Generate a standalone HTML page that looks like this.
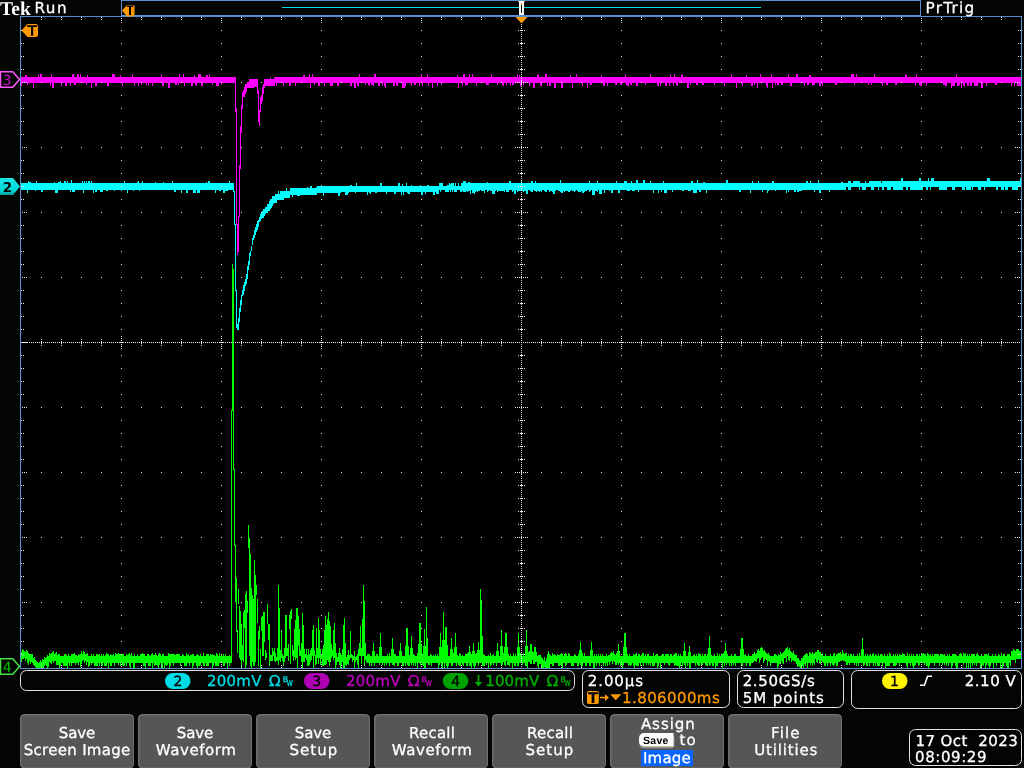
<!DOCTYPE html>
<html lang="en"><head><meta charset="utf-8"><title>Tek Run PrTrig</title>
<style>html,body{margin:0;padding:0;background:#000;overflow:hidden}svg{display:block;will-change:transform}text{font-family:'DejaVu Sans','Liberation Sans',sans-serif;white-space:pre;stroke-width:.3px;text-rendering:geometricPrecision}</style></head><body>
<svg width="1024" height="768" viewBox="0 0 1024 768" shape-rendering="crispEdges">
<rect x="0" y="0" width="1024" height="768" fill="#000"/>
<rect x="0" y="669" width="1024" height="99" fill="#030503"/>
<rect x="0" y="0" width="20" height="768" fill="#030503"/>
<rect x="0" y="0" width="121" height="16" fill="#030503"/>
<rect x="921" y="0" width="103" height="16" fill="#030503"/>
<rect x="1022" y="0" width="2" height="768" fill="#030503"/>
<rect x="122" y="1" width="798" height="14" fill="#030503"/>
<path fill="#00ff00" d="M21 652h1v10h-1zM22 649h1v10h-1zM23 650h1v9h-1zM24 651h1v7h-1zM25 652h1v9h-1zM26 650h1v9h-1zM27 651h1v12h-1zM28 653h1v12h-1zM29 654h1v7h-1zM30 654h1v10h-1zM31 654h1v8h-1zM32 654h1v9h-1zM33 658h1v7h-1zM34 657h1v9h-1zM35 660h1v7h-1zM36 661h1v7h-1zM37 662h1v6h-1zM38 663h1v5h-1zM39 662h1v6h-1zM40 660h1v8h-1zM41 662h1v6h-1zM42 659h1v9h-1zM43 660h1v8h-1zM44 657h1v9h-1zM45 658h1v7h-1zM46 657h1v9h-1zM47 655h1v13h-1zM48 656h1v11h-1zM49 653h1v9h-1zM50 654h1v9h-1zM51 653h1v11h-1zM52 652h1v9h-1zM53 651h1v12h-1zM54 654h1v7h-1zM55 653h1v8h-1zM56 652h1v13h-1zM57 655h1v10h-1zM58 654h1v11h-1zM59 654h1v14h-1zM60 656h1v10h-1zM61 656h1v7h-1zM62 656h1v7h-1zM63 656h1v10h-1zM64 654h1v12h-1zM65 654h1v12h-1zM66 655h1v11h-1zM67 656h1v12h-1zM68 654h1v9h-1zM69 656h1v10h-1zM70 656h1v7h-1zM71 654h1v12h-1zM72 654h1v9h-1zM73 654h1v9h-1zM74 653h1v10h-1zM75 655h1v10h-1zM76 655h1v8h-1zM77 656h1v7h-1zM78 654h1v11h-1zM79 655h1v7h-1zM80 654h1v13h-1zM81 651h1v13h-1zM82 654h1v7h-1zM83 651h1v9h-1zM84 652h1v11h-1zM85 654h1v7h-1zM86 654h1v11h-1zM87 653h1v9h-1zM88 656h1v11h-1zM89 656h1v10h-1zM90 656h1v7h-1zM91 654h1v11h-1zM92 656h1v7h-1zM93 654h1v9h-1zM94 656h1v10h-1zM95 656h1v10h-1zM96 654h1v12h-1zM97 654h1v12h-1zM98 655h1v8h-1zM99 654h1v12h-1zM100 656h1v7h-1zM101 654h1v12h-1zM102 656h1v10h-1zM103 654h1v9h-1zM104 656h1v10h-1zM105 655h1v11h-1zM106 653h1v13h-1zM107 654h1v9h-1zM108 654h1v14h-1zM109 656h1v7h-1zM110 654h1v12h-1zM111 655h1v11h-1zM112 655h1v8h-1zM113 654h1v9h-1zM114 656h1v10h-1zM115 653h1v10h-1zM116 654h1v9h-1zM117 654h1v9h-1zM118 653h1v12h-1zM119 654h1v9h-1zM120 654h1v12h-1zM121 654h1v9h-1zM122 654h1v11h-1zM123 654h1v12h-1zM124 656h1v10h-1zM125 656h1v7h-1zM126 654h1v12h-1zM127 655h1v8h-1zM128 654h1v9h-1zM129 653h1v13h-1zM130 655h1v13h-1zM131 653h1v10h-1zM132 656h1v7h-1zM133 656h1v12h-1zM134 654h1v14h-1zM135 656h1v7h-1zM136 656h1v7h-1zM137 654h1v9h-1zM138 656h1v7h-1zM139 656h1v7h-1zM140 654h1v9h-1zM141 654h1v9h-1zM142 653h1v10h-1zM143 654h1v12h-1zM144 654h1v12h-1zM145 656h1v12h-1zM146 656h1v7h-1zM147 654h1v9h-1zM148 654h1v12h-1zM149 655h1v11h-1zM150 656h1v10h-1zM151 654h1v9h-1zM152 653h1v15h-1zM153 655h1v8h-1zM154 655h1v11h-1zM155 653h1v12h-1zM156 655h1v10h-1zM157 656h1v10h-1zM158 654h1v14h-1zM159 653h1v12h-1zM160 654h1v9h-1zM161 656h1v12h-1zM162 654h1v14h-1zM163 654h1v9h-1zM164 656h1v12h-1zM165 656h1v9h-1zM166 656h1v10h-1zM167 656h1v9h-1zM168 653h1v10h-1zM169 654h1v14h-1zM170 654h1v12h-1zM171 654h1v9h-1zM172 654h1v9h-1zM173 654h1v12h-1zM174 654h1v9h-1zM175 655h1v8h-1zM176 654h1v9h-1zM177 654h1v9h-1zM178 654h1v9h-1zM179 654h1v9h-1zM180 656h1v10h-1zM181 656h1v7h-1zM182 654h1v9h-1zM183 655h1v8h-1zM184 656h1v10h-1zM185 656h1v10h-1zM186 653h1v13h-1zM187 655h1v8h-1zM188 654h1v9h-1zM189 656h1v10h-1zM190 655h1v8h-1zM191 655h1v8h-1zM192 654h1v14h-1zM193 654h1v12h-1zM194 656h1v7h-1zM195 656h1v7h-1zM196 655h1v11h-1zM197 654h1v14h-1zM198 655h1v11h-1zM199 656h1v10h-1zM200 654h1v11h-1zM201 656h1v7h-1zM202 656h1v7h-1zM203 653h1v13h-1zM204 656h1v10h-1zM205 656h1v7h-1zM206 654h1v12h-1zM207 654h1v12h-1zM208 654h1v12h-1zM209 656h1v7h-1zM210 654h1v9h-1zM211 655h1v8h-1zM212 654h1v14h-1zM213 655h1v11h-1zM214 655h1v8h-1zM215 656h1v10h-1zM216 653h1v13h-1zM217 654h1v12h-1zM218 656h1v10h-1zM219 653h1v10h-1zM220 656h1v7h-1zM221 655h1v8h-1zM222 656h1v7h-1zM223 654h1v12h-1zM224 656h1v10h-1zM225 654h1v9h-1zM226 656h1v7h-1zM227 656h1v12h-1zM228 656h1v7h-1zM229 655h1v11h-1zM230 656h1v7h-1zM231 410h1v253h-1zM232 264h1v147h-1zM233 269h1v201h-1zM234 469h1v77h-1zM235 545h1v57h-1zM236 578h1v54h-1zM237 630h1v23h-1zM238 589h1v15h-1zM239 606h1v52h-1zM240 611h1v49h-1zM241 624h1v44h-1zM242 645h1v15h-1zM243 612h1v50h-1zM244 610h1v18h-1zM245 594h1v74h-1zM246 591h1v74h-1zM247 601h1v12h-1zM248 525h1v23h-1zM249 538h1v118h-1zM250 554h1v112h-1zM251 588h1v80h-1zM252 595h1v67h-1zM253 599h1v67h-1zM254 560h1v106h-1zM255 575h1v87h-1zM256 585h1v10h-1zM257 599h1v24h-1zM258 631h1v35h-1zM259 626h1v13h-1zM260 649h1v19h-1zM261 617h1v14h-1zM262 616h1v40h-1zM263 612h1v44h-1zM264 612h1v30h-1zM265 650h1v10h-1zM266 653h1v5h-1zM267 604h1v20h-1zM268 624h1v16h-1zM269 624h1v42h-1zM270 655h1v6h-1zM271 655h1v6h-1zM272 648h1v13h-1zM273 651h1v5h-1zM274 648h1v13h-1zM275 653h1v9h-1zM276 657h1v4h-1zM277 648h1v13h-1zM278 585h1v80h-1zM279 608h1v52h-1zM280 650h1v12h-1zM281 630h1v28h-1zM282 654h1v7h-1zM283 656h1v10h-1zM284 648h1v14h-1zM285 615h1v43h-1zM286 615h1v41h-1zM287 648h1v8h-1zM288 644h1v17h-1zM289 615h1v14h-1zM290 611h1v53h-1zM291 609h1v10h-1zM292 645h1v11h-1zM293 650h1v11h-1zM294 629h1v28h-1zM295 620h1v40h-1zM296 608h1v50h-1zM297 608h1v60h-1zM298 616h1v30h-1zM299 629h1v27h-1zM300 650h1v6h-1zM301 643h1v19h-1zM302 613h1v55h-1zM303 625h1v37h-1zM304 649h1v13h-1zM305 654h1v4h-1zM306 649h1v11h-1zM307 655h1v11h-1zM308 649h1v17h-1zM309 654h1v11h-1zM310 650h1v12h-1zM311 648h1v12h-1zM312 630h1v26h-1zM313 625h1v43h-1zM314 650h1v6h-1zM315 655h1v10h-1zM316 628h1v36h-1zM317 648h1v10h-1zM318 618h1v46h-1zM319 630h1v28h-1zM320 649h1v16h-1zM321 655h1v4h-1zM322 649h1v17h-1zM323 645h1v21h-1zM324 630h1v35h-1zM325 616h1v49h-1zM326 625h1v39h-1zM327 619h1v41h-1zM328 612h1v50h-1zM329 621h1v45h-1zM330 626h1v36h-1zM331 644h1v14h-1zM332 650h1v6h-1zM333 630h1v30h-1zM334 623h1v35h-1zM335 643h1v25h-1zM336 653h1v12h-1zM337 657h1v5h-1zM338 653h1v9h-1zM339 648h1v17h-1zM340 653h1v15h-1zM341 655h1v10h-1zM342 649h1v13h-1zM343 625h1v43h-1zM344 618h1v50h-1zM345 643h1v22h-1zM346 657h1v9h-1zM347 655h1v9h-1zM348 650h1v15h-1zM349 655h1v5h-1zM350 631h1v27h-1zM351 654h1v4h-1zM352 655h1v7h-1zM353 656h1v4h-1zM354 651h1v17h-1zM355 657h1v5h-1zM356 656h1v4h-1zM357 654h1v11h-1zM358 649h1v19h-1zM359 643h1v13h-1zM360 626h1v30h-1zM361 648h1v16h-1zM362 619h1v37h-1zM363 585h1v71h-1zM364 601h1v65h-1zM365 643h1v17h-1zM366 656h1v6h-1zM367 654h1v9h-1zM368 654h1v9h-1zM369 654h1v12h-1zM370 656h1v7h-1zM371 656h1v10h-1zM372 651h1v12h-1zM373 643h1v20h-1zM374 651h1v15h-1zM375 656h1v7h-1zM376 654h1v9h-1zM377 654h1v9h-1zM378 656h1v7h-1zM379 647h1v18h-1zM380 633h1v30h-1zM381 647h1v16h-1zM382 656h1v9h-1zM383 656h1v7h-1zM384 656h1v10h-1zM385 656h1v7h-1zM386 656h1v9h-1zM387 654h1v9h-1zM388 656h1v7h-1zM389 653h1v13h-1zM390 656h1v7h-1zM391 649h1v14h-1zM392 638h1v27h-1zM393 649h1v16h-1zM394 654h1v12h-1zM395 654h1v9h-1zM396 656h1v7h-1zM397 656h1v10h-1zM398 656h1v10h-1zM399 651h1v12h-1zM400 643h1v20h-1zM401 651h1v12h-1zM402 656h1v10h-1zM403 656h1v10h-1zM404 656h1v7h-1zM405 646h1v20h-1zM406 628h1v35h-1zM407 628h1v37h-1zM408 646h1v20h-1zM409 655h1v11h-1zM410 648h1v15h-1zM411 636h1v29h-1zM412 648h1v15h-1zM413 654h1v12h-1zM414 655h1v8h-1zM415 656h1v10h-1zM416 656h1v7h-1zM417 653h1v15h-1zM418 644h1v19h-1zM419 623h1v40h-1zM420 623h1v42h-1zM421 644h1v19h-1zM422 654h1v11h-1zM423 646h1v20h-1zM424 629h1v39h-1zM425 646h1v22h-1zM426 607h1v56h-1zM427 638h1v25h-1zM428 656h1v9h-1zM429 656h1v9h-1zM430 654h1v9h-1zM431 655h1v11h-1zM432 656h1v7h-1zM433 655h1v8h-1zM434 656h1v7h-1zM435 654h1v9h-1zM436 656h1v7h-1zM437 654h1v9h-1zM438 656h1v12h-1zM439 647h1v18h-1zM440 633h1v30h-1zM441 647h1v19h-1zM442 640h1v28h-1zM443 612h1v51h-1zM444 640h1v28h-1zM445 627h1v36h-1zM446 627h1v39h-1zM447 645h1v23h-1zM448 656h1v10h-1zM449 656h1v7h-1zM450 649h1v14h-1zM451 638h1v28h-1zM452 649h1v17h-1zM453 653h1v10h-1zM454 647h1v16h-1zM455 633h1v30h-1zM456 647h1v19h-1zM457 655h1v8h-1zM458 656h1v9h-1zM459 653h1v13h-1zM460 654h1v12h-1zM461 656h1v7h-1zM462 655h1v10h-1zM463 656h1v10h-1zM464 656h1v7h-1zM465 654h1v9h-1zM466 654h1v12h-1zM467 653h1v13h-1zM468 652h1v11h-1zM469 646h1v20h-1zM470 652h1v14h-1zM471 654h1v14h-1zM472 651h1v12h-1zM473 643h1v23h-1zM474 651h1v17h-1zM475 654h1v12h-1zM476 653h1v10h-1zM477 650h1v13h-1zM478 642h1v24h-1zM479 650h1v13h-1zM480 589h1v74h-1zM481 600h1v63h-1zM482 636h1v30h-1zM483 654h1v12h-1zM484 655h1v11h-1zM485 656h1v7h-1zM486 656h1v9h-1zM487 656h1v7h-1zM488 655h1v13h-1zM489 656h1v7h-1zM490 653h1v13h-1zM491 656h1v9h-1zM492 655h1v8h-1zM493 654h1v11h-1zM494 656h1v7h-1zM495 656h1v7h-1zM496 651h1v15h-1zM497 643h1v20h-1zM498 651h1v12h-1zM499 656h1v7h-1zM500 646h1v17h-1zM501 630h1v36h-1zM502 646h1v19h-1zM503 653h1v9h-1zM504 647h1v18h-1zM505 633h1v33h-1zM506 633h1v28h-1zM507 647h1v18h-1zM508 654h1v11h-1zM509 656h1v10h-1zM510 654h1v9h-1zM511 656h1v7h-1zM512 656h1v12h-1zM513 653h1v10h-1zM514 656h1v10h-1zM515 654h1v12h-1zM516 656h1v7h-1zM517 647h1v19h-1zM518 633h1v33h-1zM519 647h1v16h-1zM520 653h1v10h-1zM521 654h1v9h-1zM522 656h1v9h-1zM523 653h1v10h-1zM524 656h1v7h-1zM525 646h1v20h-1zM526 630h1v36h-1zM527 646h1v22h-1zM528 652h1v10h-1zM529 651h1v11h-1zM530 644h1v20h-1zM531 644h1v20h-1zM532 651h1v9h-1zM533 652h1v12h-1zM534 647h1v17h-1zM535 647h1v15h-1zM536 652h1v10h-1zM537 656h1v10h-1zM538 655h1v13h-1zM539 655h1v9h-1zM540 655h1v9h-1zM541 657h1v11h-1zM542 658h1v10h-1zM543 660h1v8h-1zM544 657h1v10h-1zM545 661h1v7h-1zM546 658h1v10h-1zM547 654h1v14h-1zM548 651h1v17h-1zM549 654h1v14h-1zM550 655h1v9h-1zM551 656h1v8h-1zM552 653h1v13h-1zM553 655h1v11h-1zM554 654h1v9h-1zM555 655h1v8h-1zM556 656h1v7h-1zM557 654h1v9h-1zM558 655h1v11h-1zM559 655h1v11h-1zM560 654h1v11h-1zM561 653h1v13h-1zM562 654h1v14h-1zM563 656h1v7h-1zM564 654h1v9h-1zM565 653h1v13h-1zM566 654h1v11h-1zM567 656h1v7h-1zM568 653h1v10h-1zM569 654h1v9h-1zM570 656h1v7h-1zM571 656h1v10h-1zM572 656h1v10h-1zM573 656h1v10h-1zM574 654h1v9h-1zM575 655h1v8h-1zM576 656h1v7h-1zM577 656h1v10h-1zM578 654h1v12h-1zM579 650h1v13h-1zM580 642h1v23h-1zM581 650h1v18h-1zM582 653h1v13h-1zM583 656h1v7h-1zM584 653h1v10h-1zM585 656h1v10h-1zM586 656h1v10h-1zM587 656h1v7h-1zM588 656h1v7h-1zM589 656h1v10h-1zM590 650h1v16h-1zM591 642h1v21h-1zM592 650h1v13h-1zM593 656h1v12h-1zM594 654h1v14h-1zM595 656h1v7h-1zM596 654h1v12h-1zM597 656h1v7h-1zM598 654h1v9h-1zM599 656h1v10h-1zM600 654h1v9h-1zM601 656h1v7h-1zM602 654h1v9h-1zM603 656h1v10h-1zM604 656h1v7h-1zM605 656h1v10h-1zM606 654h1v9h-1zM607 656h1v10h-1zM608 655h1v7h-1zM609 655h1v10h-1zM610 653h1v9h-1zM611 652h1v9h-1zM612 653h1v11h-1zM613 651h1v10h-1zM614 654h1v8h-1zM615 655h1v10h-1zM616 653h1v12h-1zM617 651h1v12h-1zM618 644h1v21h-1zM619 651h1v12h-1zM620 656h1v10h-1zM621 656h1v9h-1zM622 656h1v12h-1zM623 647h1v18h-1zM624 633h1v30h-1zM625 633h1v30h-1zM626 647h1v16h-1zM627 654h1v9h-1zM628 656h1v10h-1zM629 654h1v11h-1zM630 656h1v10h-1zM631 656h1v9h-1zM632 656h1v7h-1zM633 654h1v12h-1zM634 655h1v13h-1zM635 654h1v11h-1zM636 653h1v13h-1zM637 656h1v10h-1zM638 654h1v12h-1zM639 654h1v9h-1zM640 656h1v10h-1zM641 655h1v8h-1zM642 653h1v10h-1zM643 653h1v13h-1zM644 656h1v7h-1zM645 654h1v9h-1zM646 656h1v9h-1zM647 654h1v9h-1zM648 654h1v11h-1zM649 656h1v7h-1zM650 656h1v10h-1zM651 656h1v7h-1zM652 656h1v10h-1zM653 653h1v13h-1zM654 656h1v10h-1zM655 655h1v8h-1zM656 654h1v9h-1zM657 654h1v14h-1zM658 656h1v10h-1zM659 656h1v7h-1zM660 656h1v12h-1zM661 655h1v8h-1zM662 654h1v9h-1zM663 654h1v9h-1zM664 656h1v9h-1zM665 654h1v9h-1zM666 654h1v9h-1zM667 654h1v9h-1zM668 654h1v11h-1zM669 656h1v10h-1zM670 654h1v9h-1zM671 654h1v9h-1zM672 656h1v7h-1zM673 655h1v8h-1zM674 654h1v12h-1zM675 653h1v12h-1zM676 653h1v13h-1zM677 656h1v10h-1zM678 654h1v12h-1zM679 656h1v12h-1zM680 654h1v12h-1zM681 656h1v7h-1zM682 656h1v10h-1zM683 651h1v12h-1zM684 643h1v22h-1zM685 651h1v17h-1zM686 656h1v7h-1zM687 656h1v10h-1zM688 652h1v11h-1zM689 646h1v22h-1zM690 652h1v16h-1zM691 656h1v7h-1zM692 656h1v7h-1zM693 655h1v8h-1zM694 654h1v9h-1zM695 656h1v10h-1zM696 654h1v9h-1zM697 656h1v9h-1zM698 653h1v13h-1zM699 654h1v12h-1zM700 654h1v9h-1zM701 656h1v9h-1zM702 654h1v11h-1zM703 656h1v7h-1zM704 654h1v9h-1zM705 654h1v11h-1zM706 656h1v10h-1zM707 654h1v12h-1zM708 648h1v15h-1zM709 636h1v30h-1zM710 648h1v17h-1zM711 655h1v8h-1zM712 656h1v10h-1zM713 656h1v10h-1zM714 654h1v9h-1zM715 656h1v12h-1zM716 656h1v10h-1zM717 653h1v13h-1zM718 656h1v7h-1zM719 654h1v9h-1zM720 656h1v7h-1zM721 654h1v9h-1zM722 654h1v14h-1zM723 653h1v10h-1zM724 651h1v15h-1zM725 643h1v20h-1zM726 651h1v14h-1zM727 654h1v9h-1zM728 656h1v7h-1zM729 656h1v10h-1zM730 656h1v7h-1zM731 654h1v12h-1zM732 656h1v7h-1zM733 656h1v9h-1zM734 654h1v9h-1zM735 654h1v12h-1zM736 656h1v7h-1zM737 656h1v7h-1zM738 656h1v7h-1zM739 656h1v7h-1zM740 649h1v14h-1zM741 638h1v27h-1zM742 638h1v28h-1zM743 649h1v14h-1zM744 655h1v8h-1zM745 654h1v9h-1zM746 656h1v10h-1zM747 656h1v7h-1zM748 654h1v9h-1zM749 656h1v10h-1zM750 656h1v10h-1zM751 656h1v7h-1zM752 654h1v9h-1zM753 654h1v8h-1zM754 652h1v9h-1zM755 654h1v7h-1zM756 653h1v9h-1zM757 650h1v9h-1zM758 649h1v9h-1zM759 651h1v12h-1zM760 648h1v12h-1zM761 647h1v11h-1zM762 648h1v9h-1zM763 651h1v12h-1zM764 650h1v11h-1zM765 652h1v7h-1zM766 653h1v7h-1zM767 654h1v12h-1zM768 653h1v8h-1zM769 655h1v7h-1zM770 656h1v10h-1zM771 656h1v7h-1zM772 656h1v7h-1zM773 656h1v7h-1zM774 654h1v9h-1zM775 654h1v9h-1zM776 655h1v8h-1zM777 656h1v12h-1zM778 654h1v12h-1zM779 655h1v9h-1zM780 652h1v12h-1zM781 654h1v7h-1zM782 653h1v10h-1zM783 652h1v12h-1zM784 651h1v7h-1zM785 649h1v9h-1zM786 648h1v14h-1zM787 647h1v9h-1zM788 650h1v10h-1zM789 648h1v13h-1zM790 651h1v7h-1zM791 652h1v10h-1zM792 653h1v7h-1zM793 651h1v10h-1zM794 654h1v7h-1zM795 655h1v7h-1zM796 655h1v9h-1zM797 658h1v9h-1zM798 658h1v8h-1zM799 660h1v7h-1zM800 661h1v7h-1zM801 658h1v10h-1zM802 658h1v8h-1zM803 656h1v12h-1zM804 655h1v9h-1zM805 654h1v12h-1zM806 653h1v10h-1zM807 654h1v14h-1zM808 656h1v7h-1zM809 652h1v11h-1zM810 653h1v12h-1zM811 654h1v9h-1zM812 652h1v14h-1zM813 654h1v9h-1zM814 653h1v12h-1zM815 652h1v7h-1zM816 652h1v10h-1zM817 650h1v13h-1zM818 650h1v10h-1zM819 652h1v11h-1zM820 652h1v12h-1zM821 654h1v7h-1zM822 653h1v9h-1zM823 656h1v7h-1zM824 656h1v10h-1zM825 654h1v12h-1zM826 656h1v7h-1zM827 656h1v10h-1zM828 656h1v7h-1zM829 656h1v7h-1zM830 654h1v12h-1zM831 656h1v7h-1zM832 656h1v9h-1zM833 654h1v12h-1zM834 653h1v12h-1zM835 656h1v7h-1zM836 654h1v12h-1zM837 654h1v12h-1zM838 653h1v9h-1zM839 653h1v9h-1zM840 652h1v9h-1zM841 654h1v7h-1zM842 650h1v10h-1zM843 653h1v8h-1zM844 654h1v7h-1zM845 653h1v9h-1zM846 653h1v12h-1zM847 656h1v9h-1zM848 654h1v9h-1zM849 656h1v9h-1zM850 654h1v9h-1zM851 654h1v9h-1zM852 656h1v7h-1zM853 654h1v9h-1zM854 656h1v9h-1zM855 656h1v7h-1zM856 656h1v10h-1zM857 654h1v9h-1zM858 656h1v10h-1zM859 653h1v10h-1zM860 656h1v7h-1zM861 649h1v14h-1zM862 638h1v25h-1zM863 649h1v17h-1zM864 656h1v9h-1zM865 654h1v9h-1zM866 656h1v10h-1zM867 654h1v12h-1zM868 656h1v7h-1zM869 655h1v11h-1zM870 654h1v9h-1zM871 656h1v7h-1zM872 654h1v9h-1zM873 653h1v13h-1zM874 656h1v7h-1zM875 654h1v12h-1zM876 655h1v8h-1zM877 656h1v10h-1zM878 654h1v12h-1zM879 656h1v10h-1zM880 654h1v9h-1zM881 654h1v9h-1zM882 655h1v11h-1zM883 656h1v7h-1zM884 654h1v9h-1zM885 656h1v12h-1zM886 656h1v10h-1zM887 654h1v12h-1zM888 656h1v10h-1zM889 653h1v13h-1zM890 654h1v9h-1zM891 656h1v7h-1zM892 656h1v7h-1zM893 654h1v12h-1zM894 656h1v10h-1zM895 654h1v12h-1zM896 656h1v9h-1zM897 654h1v9h-1zM898 656h1v7h-1zM899 654h1v12h-1zM900 655h1v8h-1zM901 655h1v8h-1zM902 653h1v10h-1zM903 654h1v9h-1zM904 654h1v9h-1zM905 656h1v7h-1zM906 656h1v10h-1zM907 653h1v15h-1zM908 656h1v7h-1zM909 654h1v9h-1zM910 656h1v10h-1zM911 654h1v9h-1zM912 656h1v10h-1zM913 654h1v14h-1zM914 656h1v10h-1zM915 656h1v9h-1zM916 654h1v9h-1zM917 654h1v9h-1zM918 656h1v10h-1zM919 654h1v11h-1zM920 656h1v7h-1zM921 653h1v10h-1zM922 654h1v9h-1zM923 653h1v10h-1zM924 654h1v11h-1zM925 654h1v9h-1zM926 656h1v10h-1zM927 653h1v13h-1zM928 654h1v14h-1zM929 655h1v11h-1zM930 654h1v9h-1zM931 656h1v7h-1zM932 654h1v9h-1zM933 656h1v7h-1zM934 654h1v12h-1zM935 654h1v9h-1zM936 654h1v9h-1zM937 654h1v9h-1zM938 654h1v9h-1zM939 656h1v10h-1zM940 654h1v9h-1zM941 654h1v9h-1zM942 654h1v11h-1zM943 655h1v8h-1zM944 654h1v11h-1zM945 656h1v7h-1zM946 656h1v10h-1zM947 654h1v9h-1zM948 656h1v10h-1zM949 654h1v9h-1zM950 656h1v7h-1zM951 656h1v12h-1zM952 654h1v12h-1zM953 654h1v9h-1zM954 654h1v9h-1zM955 654h1v12h-1zM956 655h1v13h-1zM957 656h1v12h-1zM958 656h1v7h-1zM959 654h1v9h-1zM960 653h1v10h-1zM961 654h1v9h-1zM962 656h1v7h-1zM963 653h1v12h-1zM964 654h1v9h-1zM965 653h1v10h-1zM966 656h1v12h-1zM967 654h1v9h-1zM968 656h1v12h-1zM969 654h1v9h-1zM970 656h1v12h-1zM971 654h1v9h-1zM972 654h1v12h-1zM973 654h1v9h-1zM974 654h1v11h-1zM975 656h1v7h-1zM976 654h1v12h-1zM977 653h1v10h-1zM978 655h1v8h-1zM979 656h1v7h-1zM980 656h1v12h-1zM981 654h1v14h-1zM982 656h1v9h-1zM983 656h1v10h-1zM984 654h1v9h-1zM985 654h1v14h-1zM986 654h1v11h-1zM987 655h1v8h-1zM988 653h1v13h-1zM989 656h1v12h-1zM990 656h1v10h-1zM991 656h1v7h-1zM992 654h1v9h-1zM993 656h1v12h-1zM994 656h1v7h-1zM995 654h1v9h-1zM996 656h1v10h-1zM997 656h1v7h-1zM998 654h1v9h-1zM999 655h1v8h-1zM1000 656h1v12h-1zM1001 653h1v10h-1zM1002 656h1v12h-1zM1003 654h1v12h-1zM1004 654h1v9h-1zM1005 656h1v7h-1zM1006 656h1v10h-1zM1007 654h1v14h-1zM1008 654h1v14h-1zM1009 654h1v9h-1zM1010 656h1v10h-1zM1011 651h1v9h-1zM1012 651h1v9h-1zM1013 649h1v11h-1zM1014 650h1v10h-1zM1015 651h1v12h-1zM1016 649h1v10h-1zM1017 649h1v10h-1zM1018 649h1v10h-1zM1019 651h1v8h-1zM1020 651h1v8h-1z"/>
<path fill="#00ffff" d="M21 183h1v7h-1zM22 183h1v7h-1zM23 183h1v7h-1zM24 183h1v7h-1zM25 183h1v7h-1zM26 183h1v7h-1zM27 183h1v10h-1zM28 181h1v9h-1zM29 182h1v8h-1zM30 182h1v8h-1zM31 183h1v7h-1zM32 183h1v7h-1zM33 183h1v7h-1zM34 183h1v7h-1zM35 183h1v8h-1zM36 181h1v9h-1zM37 183h1v7h-1zM38 183h1v7h-1zM39 183h1v7h-1zM40 183h1v7h-1zM41 183h1v9h-1zM42 183h1v9h-1zM43 183h1v7h-1zM44 183h1v7h-1zM45 183h1v7h-1zM46 183h1v7h-1zM47 183h1v7h-1zM48 183h1v7h-1zM49 183h1v7h-1zM50 183h1v7h-1zM51 183h1v7h-1zM52 183h1v7h-1zM53 183h1v7h-1zM54 182h1v8h-1zM55 183h1v10h-1zM56 183h1v10h-1zM57 183h1v10h-1zM58 182h1v8h-1zM59 182h1v8h-1zM60 181h1v9h-1zM61 183h1v7h-1zM62 183h1v7h-1zM63 183h1v7h-1zM64 181h1v9h-1zM65 181h1v9h-1zM66 183h1v7h-1zM67 181h1v9h-1zM68 183h1v7h-1zM69 183h1v7h-1zM70 183h1v9h-1zM71 180h1v10h-1zM72 183h1v9h-1zM73 183h1v9h-1zM74 183h1v9h-1zM75 183h1v7h-1zM76 183h1v7h-1zM77 183h1v7h-1zM78 183h1v7h-1zM79 183h1v7h-1zM80 183h1v7h-1zM81 183h1v7h-1zM82 181h1v9h-1zM83 183h1v10h-1zM84 181h1v9h-1zM85 183h1v7h-1zM86 181h1v9h-1zM87 183h1v7h-1zM88 181h1v9h-1zM89 181h1v9h-1zM90 183h1v7h-1zM91 181h1v9h-1zM92 183h1v7h-1zM93 183h1v10h-1zM94 183h1v7h-1zM95 183h1v9h-1zM96 183h1v9h-1zM97 183h1v7h-1zM98 183h1v7h-1zM99 183h1v7h-1zM100 183h1v9h-1zM101 183h1v9h-1zM102 183h1v9h-1zM103 183h1v7h-1zM104 183h1v7h-1zM105 183h1v7h-1zM106 183h1v8h-1zM107 183h1v8h-1zM108 183h1v7h-1zM109 183h1v7h-1zM110 183h1v7h-1zM111 183h1v7h-1zM112 183h1v7h-1zM113 183h1v7h-1zM114 183h1v8h-1zM115 183h1v7h-1zM116 183h1v7h-1zM117 183h1v7h-1zM118 183h1v7h-1zM119 183h1v7h-1zM120 183h1v7h-1zM121 183h1v8h-1zM122 183h1v7h-1zM123 183h1v7h-1zM124 181h1v9h-1zM125 183h1v7h-1zM126 183h1v7h-1zM127 183h1v10h-1zM128 183h1v7h-1zM129 183h1v7h-1zM130 183h1v7h-1zM131 183h1v7h-1zM132 183h1v7h-1zM133 183h1v8h-1zM134 183h1v7h-1zM135 183h1v7h-1zM136 183h1v7h-1zM137 182h1v8h-1zM138 181h1v9h-1zM139 183h1v8h-1zM140 183h1v7h-1zM141 183h1v7h-1zM142 181h1v9h-1zM143 183h1v7h-1zM144 183h1v7h-1zM145 183h1v7h-1zM146 183h1v7h-1zM147 183h1v7h-1zM148 183h1v7h-1zM149 183h1v7h-1zM150 183h1v7h-1zM151 183h1v7h-1zM152 183h1v7h-1zM153 183h1v7h-1zM154 183h1v7h-1zM155 182h1v8h-1zM156 183h1v7h-1zM157 183h1v7h-1zM158 183h1v7h-1zM159 183h1v7h-1zM160 183h1v7h-1zM161 183h1v7h-1zM162 183h1v7h-1zM163 182h1v8h-1zM164 183h1v7h-1zM165 183h1v7h-1zM166 183h1v7h-1zM167 183h1v7h-1zM168 183h1v7h-1zM169 183h1v7h-1zM170 183h1v7h-1zM171 183h1v7h-1zM172 181h1v9h-1zM173 183h1v7h-1zM174 183h1v9h-1zM175 183h1v9h-1zM176 183h1v7h-1zM177 183h1v7h-1zM178 183h1v7h-1zM179 183h1v7h-1zM180 183h1v7h-1zM181 183h1v10h-1zM182 183h1v7h-1zM183 183h1v7h-1zM184 183h1v7h-1zM185 183h1v7h-1zM186 183h1v10h-1zM187 183h1v10h-1zM188 183h1v7h-1zM189 183h1v7h-1zM190 183h1v7h-1zM191 183h1v7h-1zM192 183h1v7h-1zM193 183h1v10h-1zM194 183h1v10h-1zM195 183h1v10h-1zM196 183h1v7h-1zM197 183h1v10h-1zM198 183h1v10h-1zM199 183h1v10h-1zM200 183h1v7h-1zM201 183h1v7h-1zM202 183h1v7h-1zM203 183h1v7h-1zM204 183h1v7h-1zM205 183h1v7h-1zM206 182h1v8h-1zM207 183h1v7h-1zM208 181h1v9h-1zM209 181h1v9h-1zM210 183h1v7h-1zM211 183h1v7h-1zM212 183h1v7h-1zM213 183h1v7h-1zM214 183h1v7h-1zM215 183h1v10h-1zM216 183h1v7h-1zM217 183h1v7h-1zM218 183h1v7h-1zM219 183h1v8h-1zM220 183h1v8h-1zM221 183h1v7h-1zM222 183h1v7h-1zM223 183h1v10h-1zM224 183h1v10h-1zM225 183h1v8h-1zM226 183h1v8h-1zM227 183h1v8h-1zM228 183h1v7h-1zM229 181h1v9h-1zM230 183h1v7h-1zM231 183h1v7h-1zM232 183h1v7h-1zM233 183h1v9h-1zM234 191h1v34h-1zM235 224h1v67h-1zM236 290h1v38h-1zM237 324h1v6h-1zM238 318h1v12h-1zM239 308h1v14h-1zM240 300h1v12h-1zM241 295h1v10h-1zM242 290h1v6h-1zM243 285h1v10h-1zM244 282h1v9h-1zM245 279h1v7h-1zM246 274h1v10h-1zM247 266h1v13h-1zM248 261h1v9h-1zM249 253h1v12h-1zM250 251h1v5h-1zM251 246h1v5h-1zM252 238h1v7h-1zM253 235h1v5h-1zM254 230h1v8h-1zM255 227h1v8h-1zM256 224h1v8h-1zM257 221h1v9h-1zM258 220h1v7h-1zM259 217h1v5h-1zM260 214h1v7h-1zM261 212h1v7h-1zM262 211h1v7h-1zM263 209h1v9h-1zM264 209h1v7h-1zM265 207h1v7h-1zM266 207h1v6h-1zM267 204h1v9h-1zM268 204h1v7h-1zM269 201h1v10h-1zM270 199h1v10h-1zM271 199h1v9h-1zM272 196h1v10h-1zM273 196h1v8h-1zM274 196h1v7h-1zM275 194h1v9h-1zM276 194h1v9h-1zM277 194h1v6h-1zM278 191h1v9h-1zM279 194h1v6h-1zM280 191h1v9h-1zM281 191h1v9h-1zM282 191h1v9h-1zM283 191h1v9h-1zM284 191h1v7h-1zM285 191h1v7h-1zM286 188h1v10h-1zM287 191h1v7h-1zM288 191h1v7h-1zM289 191h1v7h-1zM290 188h1v7h-1zM291 188h1v7h-1zM292 188h1v9h-1zM293 188h1v7h-1zM294 188h1v7h-1zM295 188h1v7h-1zM296 188h1v7h-1zM297 188h1v8h-1zM298 188h1v8h-1zM299 188h1v8h-1zM300 188h1v7h-1zM301 188h1v7h-1zM302 188h1v7h-1zM303 188h1v7h-1zM304 188h1v7h-1zM305 188h1v7h-1zM306 188h1v7h-1zM307 187h1v8h-1zM308 188h1v7h-1zM309 188h1v7h-1zM310 186h1v9h-1zM311 186h1v9h-1zM312 188h1v7h-1zM313 188h1v7h-1zM314 188h1v7h-1zM315 188h1v7h-1zM316 187h1v8h-1zM317 186h1v7h-1zM318 186h1v7h-1zM319 186h1v7h-1zM320 186h1v7h-1zM321 185h1v8h-1zM322 186h1v7h-1zM323 186h1v10h-1zM324 186h1v7h-1zM325 186h1v7h-1zM326 186h1v7h-1zM327 186h1v7h-1zM328 186h1v7h-1zM329 186h1v7h-1zM330 186h1v7h-1zM331 186h1v7h-1zM332 186h1v7h-1zM333 186h1v7h-1zM334 186h1v7h-1zM335 186h1v7h-1zM336 186h1v7h-1zM337 186h1v7h-1zM338 186h1v10h-1zM339 186h1v10h-1zM340 186h1v7h-1zM341 186h1v6h-1zM342 186h1v6h-1zM343 186h1v6h-1zM344 186h1v6h-1zM345 186h1v9h-1zM346 186h1v9h-1zM347 186h1v9h-1zM348 186h1v7h-1zM349 186h1v6h-1zM350 185h1v7h-1zM351 185h1v7h-1zM352 186h1v6h-1zM353 186h1v6h-1zM354 186h1v6h-1zM355 186h1v7h-1zM356 183h1v9h-1zM357 186h1v6h-1zM358 186h1v6h-1zM359 186h1v6h-1zM360 186h1v6h-1zM361 186h1v6h-1zM362 186h1v6h-1zM363 186h1v6h-1zM364 186h1v6h-1zM365 186h1v6h-1zM366 186h1v6h-1zM367 186h1v9h-1zM368 186h1v6h-1zM369 186h1v7h-1zM370 186h1v8h-1zM371 186h1v6h-1zM372 186h1v6h-1zM373 186h1v6h-1zM374 186h1v6h-1zM375 186h1v7h-1zM376 186h1v7h-1zM377 186h1v6h-1zM378 186h1v6h-1zM379 186h1v6h-1zM380 183h1v9h-1zM381 183h1v9h-1zM382 186h1v6h-1zM383 186h1v6h-1zM384 186h1v6h-1zM385 186h1v6h-1zM386 186h1v8h-1zM387 186h1v6h-1zM388 186h1v6h-1zM389 186h1v6h-1zM390 186h1v6h-1zM391 186h1v6h-1zM392 186h1v6h-1zM393 186h1v6h-1zM394 186h1v8h-1zM395 186h1v8h-1zM396 186h1v6h-1zM397 186h1v6h-1zM398 183h1v9h-1zM399 183h1v9h-1zM400 186h1v6h-1zM401 186h1v9h-1zM402 184h1v8h-1zM403 186h1v9h-1zM404 186h1v6h-1zM405 186h1v6h-1zM406 183h1v9h-1zM407 186h1v7h-1zM408 186h1v8h-1zM409 186h1v8h-1zM410 186h1v6h-1zM411 185h1v7h-1zM412 186h1v6h-1zM413 186h1v6h-1zM414 186h1v6h-1zM415 186h1v6h-1zM416 186h1v6h-1zM417 186h1v6h-1zM418 186h1v6h-1zM419 186h1v6h-1zM420 185h1v7h-1zM421 186h1v9h-1zM422 186h1v9h-1zM423 186h1v6h-1zM424 186h1v6h-1zM425 186h1v8h-1zM426 186h1v6h-1zM427 185h1v7h-1zM428 185h1v7h-1zM429 186h1v6h-1zM430 186h1v6h-1zM431 186h1v6h-1zM432 186h1v6h-1zM433 186h1v9h-1zM434 186h1v9h-1zM435 186h1v6h-1zM436 186h1v8h-1zM437 186h1v8h-1zM438 186h1v8h-1zM439 183h1v7h-1zM440 183h1v9h-1zM441 183h1v7h-1zM442 183h1v7h-1zM443 186h1v4h-1zM444 186h1v4h-1zM445 186h1v6h-1zM446 186h1v6h-1zM447 185h1v7h-1zM448 185h1v7h-1zM449 183h1v7h-1zM450 184h1v8h-1zM451 183h1v7h-1zM452 183h1v9h-1zM453 183h1v7h-1zM454 186h1v6h-1zM455 183h1v9h-1zM456 186h1v6h-1zM457 186h1v4h-1zM458 183h1v7h-1zM459 186h1v4h-1zM460 186h1v6h-1zM461 183h1v9h-1zM462 183h1v8h-1zM463 181h1v11h-1zM464 181h1v11h-1zM465 181h1v11h-1zM466 183h1v8h-1zM467 183h1v9h-1zM468 182h1v9h-1zM469 182h1v9h-1zM470 183h1v11h-1zM471 183h1v7h-1zM472 183h1v10h-1zM473 183h1v10h-1zM474 183h1v11h-1zM475 183h1v9h-1zM476 183h1v8h-1zM477 183h1v9h-1zM478 183h1v8h-1zM479 183h1v8h-1zM480 183h1v7h-1zM481 183h1v8h-1zM482 183h1v8h-1zM483 183h1v8h-1zM484 183h1v10h-1zM485 183h1v7h-1zM486 183h1v7h-1zM487 182h1v10h-1zM488 183h1v8h-1zM489 183h1v7h-1zM490 183h1v8h-1zM491 183h1v8h-1zM492 183h1v11h-1zM493 183h1v11h-1zM494 183h1v11h-1zM495 183h1v8h-1zM496 183h1v7h-1zM497 183h1v9h-1zM498 183h1v8h-1zM499 183h1v8h-1zM500 183h1v8h-1zM501 183h1v8h-1zM502 183h1v8h-1zM503 183h1v8h-1zM504 183h1v9h-1zM505 183h1v7h-1zM506 183h1v9h-1zM507 183h1v9h-1zM508 183h1v9h-1zM509 181h1v9h-1zM510 181h1v9h-1zM511 183h1v7h-1zM512 183h1v9h-1zM513 183h1v8h-1zM514 183h1v11h-1zM515 183h1v11h-1zM516 183h1v7h-1zM517 183h1v9h-1zM518 183h1v8h-1zM519 183h1v8h-1zM520 183h1v8h-1zM521 181h1v10h-1zM522 183h1v8h-1zM523 183h1v9h-1zM524 183h1v8h-1zM525 183h1v8h-1zM526 183h1v11h-1zM527 183h1v11h-1zM528 183h1v7h-1zM529 183h1v7h-1zM530 183h1v8h-1zM531 181h1v11h-1zM532 181h1v11h-1zM533 183h1v7h-1zM534 183h1v8h-1zM535 181h1v10h-1zM536 183h1v9h-1zM537 183h1v8h-1zM538 183h1v8h-1zM539 183h1v9h-1zM540 183h1v8h-1zM541 183h1v9h-1zM542 183h1v7h-1zM543 183h1v7h-1zM544 183h1v8h-1zM545 183h1v9h-1zM546 183h1v9h-1zM547 183h1v7h-1zM548 183h1v7h-1zM549 183h1v9h-1zM550 183h1v8h-1zM551 183h1v8h-1zM552 183h1v9h-1zM553 183h1v11h-1zM554 183h1v11h-1zM555 183h1v8h-1zM556 183h1v7h-1zM557 183h1v7h-1zM558 183h1v8h-1zM559 183h1v8h-1zM560 180h1v12h-1zM561 183h1v10h-1zM562 183h1v10h-1zM563 183h1v8h-1zM564 183h1v9h-1zM565 183h1v8h-1zM566 183h1v8h-1zM567 183h1v8h-1zM568 183h1v9h-1zM569 183h1v9h-1zM570 183h1v8h-1zM571 183h1v7h-1zM572 183h1v8h-1zM573 183h1v8h-1zM574 183h1v9h-1zM575 183h1v8h-1zM576 183h1v7h-1zM577 183h1v8h-1zM578 183h1v9h-1zM579 183h1v9h-1zM580 183h1v9h-1zM581 183h1v8h-1zM582 183h1v10h-1zM583 183h1v10h-1zM584 183h1v9h-1zM585 183h1v8h-1zM586 183h1v8h-1zM587 183h1v7h-1zM588 183h1v7h-1zM589 181h1v11h-1zM590 183h1v8h-1zM591 183h1v7h-1zM592 183h1v12h-1zM593 183h1v12h-1zM594 183h1v12h-1zM595 183h1v8h-1zM596 183h1v8h-1zM597 181h1v11h-1zM598 183h1v7h-1zM599 183h1v11h-1zM600 183h1v11h-1zM601 183h1v11h-1zM602 183h1v7h-1zM603 183h1v7h-1zM604 183h1v10h-1zM605 183h1v7h-1zM606 183h1v7h-1zM607 183h1v7h-1zM608 183h1v7h-1zM609 183h1v8h-1zM610 183h1v7h-1zM611 183h1v10h-1zM612 183h1v10h-1zM613 183h1v7h-1zM614 183h1v7h-1zM615 183h1v7h-1zM616 181h1v9h-1zM617 183h1v7h-1zM618 183h1v10h-1zM619 183h1v10h-1zM620 183h1v7h-1zM621 183h1v7h-1zM622 183h1v7h-1zM623 183h1v7h-1zM624 181h1v9h-1zM625 181h1v9h-1zM626 181h1v9h-1zM627 183h1v8h-1zM628 183h1v8h-1zM629 183h1v8h-1zM630 183h1v7h-1zM631 181h1v9h-1zM632 183h1v8h-1zM633 183h1v8h-1zM634 183h1v8h-1zM635 183h1v7h-1zM636 180h1v10h-1zM637 180h1v10h-1zM638 183h1v9h-1zM639 183h1v7h-1zM640 183h1v7h-1zM641 183h1v7h-1zM642 183h1v7h-1zM643 180h1v10h-1zM644 180h1v10h-1zM645 183h1v7h-1zM646 183h1v7h-1zM647 183h1v7h-1zM648 183h1v7h-1zM649 183h1v7h-1zM650 181h1v9h-1zM651 183h1v7h-1zM652 183h1v7h-1zM653 183h1v10h-1zM654 183h1v7h-1zM655 183h1v7h-1zM656 183h1v7h-1zM657 183h1v7h-1zM658 183h1v10h-1zM659 183h1v7h-1zM660 183h1v7h-1zM661 183h1v9h-1zM662 183h1v7h-1zM663 181h1v9h-1zM664 183h1v10h-1zM665 183h1v10h-1zM666 183h1v10h-1zM667 183h1v7h-1zM668 183h1v7h-1zM669 183h1v7h-1zM670 183h1v7h-1zM671 183h1v7h-1zM672 183h1v9h-1zM673 183h1v7h-1zM674 183h1v7h-1zM675 183h1v7h-1zM676 183h1v7h-1zM677 183h1v7h-1zM678 183h1v7h-1zM679 183h1v7h-1zM680 183h1v7h-1zM681 183h1v7h-1zM682 183h1v8h-1zM683 183h1v8h-1zM684 183h1v7h-1zM685 183h1v7h-1zM686 183h1v7h-1zM687 183h1v7h-1zM688 183h1v8h-1zM689 183h1v8h-1zM690 183h1v8h-1zM691 181h1v9h-1zM692 181h1v9h-1zM693 183h1v10h-1zM694 183h1v10h-1zM695 183h1v10h-1zM696 183h1v10h-1zM697 180h1v10h-1zM698 183h1v7h-1zM699 183h1v9h-1zM700 183h1v9h-1zM701 183h1v7h-1zM702 183h1v7h-1zM703 182h1v8h-1zM704 182h1v8h-1zM705 183h1v7h-1zM706 183h1v10h-1zM707 183h1v7h-1zM708 183h1v7h-1zM709 183h1v7h-1zM710 183h1v7h-1zM711 183h1v7h-1zM712 183h1v7h-1zM713 183h1v7h-1zM714 183h1v7h-1zM715 183h1v7h-1zM716 183h1v7h-1zM717 183h1v7h-1zM718 183h1v7h-1zM719 183h1v7h-1zM720 183h1v7h-1zM721 183h1v7h-1zM722 183h1v7h-1zM723 183h1v7h-1zM724 183h1v7h-1zM725 183h1v7h-1zM726 180h1v10h-1zM727 180h1v10h-1zM728 183h1v7h-1zM729 183h1v7h-1zM730 183h1v7h-1zM731 183h1v7h-1zM732 183h1v7h-1zM733 183h1v7h-1zM734 183h1v7h-1zM735 183h1v7h-1zM736 183h1v7h-1zM737 183h1v7h-1zM738 183h1v7h-1zM739 183h1v9h-1zM740 183h1v9h-1zM741 183h1v7h-1zM742 183h1v7h-1zM743 183h1v7h-1zM744 183h1v7h-1zM745 183h1v7h-1zM746 183h1v7h-1zM747 183h1v7h-1zM748 183h1v7h-1zM749 183h1v7h-1zM750 183h1v10h-1zM751 183h1v7h-1zM752 181h1v9h-1zM753 183h1v7h-1zM754 183h1v7h-1zM755 183h1v7h-1zM756 183h1v7h-1zM757 183h1v7h-1zM758 181h1v9h-1zM759 183h1v7h-1zM760 183h1v7h-1zM761 183h1v7h-1zM762 183h1v9h-1zM763 183h1v7h-1zM764 183h1v7h-1zM765 183h1v7h-1zM766 183h1v7h-1zM767 183h1v10h-1zM768 183h1v8h-1zM769 183h1v7h-1zM770 183h1v7h-1zM771 183h1v7h-1zM772 181h1v9h-1zM773 181h1v9h-1zM774 183h1v7h-1zM775 183h1v8h-1zM776 183h1v7h-1zM777 183h1v7h-1zM778 183h1v7h-1zM779 183h1v7h-1zM780 183h1v7h-1zM781 183h1v7h-1zM782 183h1v7h-1zM783 183h1v7h-1zM784 183h1v7h-1zM785 183h1v7h-1zM786 183h1v10h-1zM787 183h1v7h-1zM788 183h1v9h-1zM789 183h1v7h-1zM790 183h1v7h-1zM791 183h1v7h-1zM792 183h1v7h-1zM793 183h1v7h-1zM794 183h1v9h-1zM795 183h1v9h-1zM796 183h1v7h-1zM797 183h1v9h-1zM798 183h1v9h-1zM799 183h1v8h-1zM800 183h1v8h-1zM801 183h1v8h-1zM802 183h1v7h-1zM803 183h1v7h-1zM804 183h1v7h-1zM805 183h1v7h-1zM806 181h1v9h-1zM807 181h1v9h-1zM808 183h1v7h-1zM809 183h1v7h-1zM810 181h1v9h-1zM811 183h1v7h-1zM812 183h1v7h-1zM813 183h1v7h-1zM814 183h1v9h-1zM815 183h1v7h-1zM816 183h1v7h-1zM817 183h1v7h-1zM818 180h1v10h-1zM819 183h1v10h-1zM820 183h1v10h-1zM821 183h1v7h-1zM822 183h1v7h-1zM823 183h1v7h-1zM824 183h1v7h-1zM825 183h1v7h-1zM826 183h1v7h-1zM827 183h1v7h-1zM828 183h1v7h-1zM829 183h1v9h-1zM830 183h1v7h-1zM831 183h1v7h-1zM832 183h1v7h-1zM833 183h1v7h-1zM834 183h1v7h-1zM835 183h1v7h-1zM836 183h1v7h-1zM837 183h1v7h-1zM838 183h1v7h-1zM839 183h1v7h-1zM840 183h1v7h-1zM841 182h1v8h-1zM842 182h1v8h-1zM843 183h1v7h-1zM844 183h1v7h-1zM845 183h1v7h-1zM846 183h1v4h-1zM847 183h1v4h-1zM848 181h1v9h-1zM849 181h1v9h-1zM850 181h1v9h-1zM851 183h1v4h-1zM852 183h1v4h-1zM853 181h1v6h-1zM854 181h1v6h-1zM855 181h1v6h-1zM856 181h1v6h-1zM857 181h1v6h-1zM858 181h1v6h-1zM859 181h1v9h-1zM860 183h1v4h-1zM861 183h1v4h-1zM862 183h1v7h-1zM863 183h1v7h-1zM864 183h1v7h-1zM865 181h1v9h-1zM866 183h1v4h-1zM867 183h1v4h-1zM868 183h1v4h-1zM869 181h1v6h-1zM870 181h1v6h-1zM871 181h1v9h-1zM872 181h1v9h-1zM873 181h1v9h-1zM874 181h1v6h-1zM875 181h1v6h-1zM876 181h1v6h-1zM877 181h1v6h-1zM878 181h1v9h-1zM879 181h1v6h-1zM880 181h1v6h-1zM881 183h1v4h-1zM882 181h1v9h-1zM883 181h1v9h-1zM884 181h1v6h-1zM885 181h1v6h-1zM886 181h1v6h-1zM887 181h1v9h-1zM888 181h1v9h-1zM889 181h1v9h-1zM890 181h1v9h-1zM891 181h1v6h-1zM892 181h1v6h-1zM893 181h1v9h-1zM894 181h1v9h-1zM895 181h1v9h-1zM896 181h1v9h-1zM897 181h1v9h-1zM898 181h1v9h-1zM899 181h1v9h-1zM900 181h1v9h-1zM901 178h1v12h-1zM902 178h1v12h-1zM903 181h1v6h-1zM904 181h1v6h-1zM905 181h1v6h-1zM906 181h1v9h-1zM907 181h1v9h-1zM908 181h1v6h-1zM909 181h1v6h-1zM910 181h1v9h-1zM911 181h1v9h-1zM912 181h1v9h-1zM913 181h1v9h-1zM914 181h1v9h-1zM915 181h1v9h-1zM916 181h1v9h-1zM917 181h1v9h-1zM918 181h1v9h-1zM919 178h1v12h-1zM920 178h1v12h-1zM921 181h1v9h-1zM922 181h1v9h-1zM923 181h1v6h-1zM924 181h1v6h-1zM925 181h1v6h-1zM926 181h1v9h-1zM927 181h1v9h-1zM928 178h1v9h-1zM929 181h1v6h-1zM930 181h1v9h-1zM931 178h1v9h-1zM932 178h1v9h-1zM933 178h1v9h-1zM934 181h1v6h-1zM935 181h1v6h-1zM936 181h1v6h-1zM937 181h1v6h-1zM938 181h1v6h-1zM939 181h1v9h-1zM940 181h1v9h-1zM941 181h1v9h-1zM942 181h1v9h-1zM943 181h1v9h-1zM944 181h1v9h-1zM945 181h1v9h-1zM946 181h1v9h-1zM947 181h1v6h-1zM948 181h1v6h-1zM949 181h1v6h-1zM950 181h1v6h-1zM951 181h1v6h-1zM952 181h1v9h-1zM953 181h1v9h-1zM954 181h1v9h-1zM955 181h1v6h-1zM956 181h1v6h-1zM957 181h1v6h-1zM958 181h1v6h-1zM959 181h1v6h-1zM960 181h1v6h-1zM961 181h1v6h-1zM962 181h1v9h-1zM963 181h1v9h-1zM964 181h1v9h-1zM965 181h1v6h-1zM966 181h1v9h-1zM967 181h1v9h-1zM968 181h1v9h-1zM969 181h1v9h-1zM970 181h1v9h-1zM971 181h1v6h-1zM972 181h1v9h-1zM973 181h1v6h-1zM974 181h1v6h-1zM975 181h1v6h-1zM976 181h1v6h-1zM977 181h1v6h-1zM978 181h1v9h-1zM979 181h1v9h-1zM980 181h1v9h-1zM981 181h1v6h-1zM982 181h1v6h-1zM983 181h1v6h-1zM984 181h1v9h-1zM985 181h1v6h-1zM986 181h1v6h-1zM987 178h1v9h-1zM988 178h1v9h-1zM989 178h1v9h-1zM990 181h1v6h-1zM991 181h1v6h-1zM992 181h1v6h-1zM993 181h1v6h-1zM994 181h1v6h-1zM995 181h1v6h-1zM996 181h1v9h-1zM997 181h1v9h-1zM998 181h1v6h-1zM999 181h1v6h-1zM1000 181h1v6h-1zM1001 181h1v9h-1zM1002 181h1v9h-1zM1003 181h1v9h-1zM1004 181h1v6h-1zM1005 181h1v9h-1zM1006 181h1v9h-1zM1007 181h1v9h-1zM1008 181h1v6h-1zM1009 181h1v6h-1zM1010 181h1v6h-1zM1011 181h1v6h-1zM1012 181h1v9h-1zM1013 181h1v9h-1zM1014 181h1v9h-1zM1015 181h1v9h-1zM1016 181h1v9h-1zM1017 181h1v9h-1zM1018 181h1v6h-1zM1019 181h1v6h-1zM1020 178h1v9h-1z"/>
<path fill="#ff00ff" d="M21 77h1v9h-1zM22 77h1v6h-1zM23 77h1v6h-1zM24 77h1v6h-1zM25 75h1v8h-1zM26 75h1v8h-1zM27 77h1v8h-1zM28 77h1v6h-1zM29 77h1v6h-1zM30 77h1v6h-1zM31 77h1v6h-1zM32 77h1v6h-1zM33 77h1v11h-1zM34 77h1v6h-1zM35 77h1v6h-1zM36 77h1v6h-1zM37 77h1v6h-1zM38 74h1v9h-1zM39 77h1v6h-1zM40 74h1v9h-1zM41 74h1v9h-1zM42 77h1v6h-1zM43 77h1v6h-1zM44 77h1v6h-1zM45 77h1v6h-1zM46 77h1v6h-1zM47 77h1v6h-1zM48 77h1v6h-1zM49 77h1v6h-1zM50 77h1v9h-1zM51 74h1v9h-1zM52 77h1v11h-1zM53 77h1v11h-1zM54 77h1v6h-1zM55 77h1v6h-1zM56 77h1v6h-1zM57 77h1v6h-1zM58 77h1v6h-1zM59 77h1v6h-1zM60 77h1v6h-1zM61 77h1v9h-1zM62 77h1v6h-1zM63 77h1v6h-1zM64 77h1v6h-1zM65 77h1v9h-1zM66 77h1v9h-1zM67 77h1v6h-1zM68 77h1v6h-1zM69 77h1v6h-1zM70 77h1v9h-1zM71 77h1v6h-1zM72 74h1v9h-1zM73 74h1v9h-1zM74 77h1v8h-1zM75 77h1v8h-1zM76 77h1v6h-1zM77 74h1v9h-1zM78 74h1v9h-1zM79 77h1v6h-1zM80 74h1v9h-1zM81 77h1v6h-1zM82 77h1v6h-1zM83 77h1v6h-1zM84 77h1v6h-1zM85 77h1v6h-1zM86 77h1v8h-1zM87 75h1v8h-1zM88 77h1v6h-1zM89 77h1v6h-1zM90 77h1v6h-1zM91 77h1v11h-1zM92 77h1v6h-1zM93 77h1v6h-1zM94 77h1v6h-1zM95 77h1v9h-1zM96 77h1v9h-1zM97 77h1v6h-1zM98 77h1v6h-1zM99 77h1v6h-1zM100 77h1v6h-1zM101 77h1v6h-1zM102 77h1v6h-1zM103 77h1v6h-1zM104 77h1v6h-1zM105 77h1v6h-1zM106 77h1v6h-1zM107 77h1v9h-1zM108 77h1v9h-1zM109 77h1v6h-1zM110 77h1v6h-1zM111 77h1v6h-1zM112 74h1v9h-1zM113 74h1v9h-1zM114 74h1v9h-1zM115 77h1v6h-1zM116 77h1v6h-1zM117 77h1v6h-1zM118 77h1v6h-1zM119 77h1v6h-1zM120 75h1v8h-1zM121 77h1v6h-1zM122 77h1v9h-1zM123 77h1v6h-1zM124 77h1v6h-1zM125 77h1v6h-1zM126 77h1v6h-1zM127 77h1v6h-1zM128 77h1v6h-1zM129 77h1v6h-1zM130 77h1v6h-1zM131 77h1v6h-1zM132 74h1v9h-1zM133 77h1v6h-1zM134 77h1v9h-1zM135 77h1v6h-1zM136 77h1v6h-1zM137 77h1v6h-1zM138 77h1v9h-1zM139 77h1v6h-1zM140 77h1v6h-1zM141 77h1v8h-1zM142 77h1v6h-1zM143 77h1v6h-1zM144 77h1v6h-1zM145 77h1v6h-1zM146 77h1v8h-1zM147 77h1v6h-1zM148 77h1v9h-1zM149 77h1v6h-1zM150 77h1v6h-1zM151 77h1v6h-1zM152 77h1v9h-1zM153 77h1v6h-1zM154 77h1v6h-1zM155 77h1v6h-1zM156 77h1v6h-1zM157 77h1v6h-1zM158 77h1v6h-1zM159 77h1v6h-1zM160 77h1v6h-1zM161 74h1v9h-1zM162 77h1v9h-1zM163 77h1v9h-1zM164 77h1v6h-1zM165 77h1v6h-1zM166 77h1v6h-1zM167 77h1v6h-1zM168 77h1v11h-1zM169 77h1v11h-1zM170 77h1v6h-1zM171 77h1v6h-1zM172 77h1v6h-1zM173 77h1v6h-1zM174 77h1v6h-1zM175 77h1v8h-1zM176 77h1v8h-1zM177 77h1v6h-1zM178 77h1v8h-1zM179 74h1v9h-1zM180 77h1v6h-1zM181 77h1v6h-1zM182 77h1v6h-1zM183 74h1v9h-1zM184 77h1v9h-1zM185 77h1v6h-1zM186 77h1v6h-1zM187 77h1v6h-1zM188 77h1v6h-1zM189 77h1v6h-1zM190 77h1v6h-1zM191 77h1v9h-1zM192 77h1v9h-1zM193 77h1v6h-1zM194 75h1v8h-1zM195 77h1v8h-1zM196 77h1v9h-1zM197 77h1v6h-1zM198 74h1v9h-1zM199 74h1v9h-1zM200 74h1v9h-1zM201 77h1v9h-1zM202 77h1v9h-1zM203 77h1v6h-1zM204 77h1v6h-1zM205 77h1v6h-1zM206 75h1v8h-1zM207 75h1v8h-1zM208 77h1v6h-1zM209 74h1v9h-1zM210 77h1v6h-1zM211 77h1v6h-1zM212 77h1v8h-1zM213 77h1v6h-1zM214 77h1v6h-1zM215 77h1v6h-1zM216 77h1v9h-1zM217 77h1v9h-1zM218 77h1v9h-1zM219 77h1v6h-1zM220 77h1v6h-1zM221 77h1v8h-1zM222 77h1v6h-1zM223 77h1v6h-1zM224 77h1v6h-1zM225 77h1v6h-1zM226 77h1v6h-1zM227 77h1v6h-1zM228 77h1v6h-1zM229 77h1v6h-1zM230 77h1v6h-1zM231 77h1v6h-1zM232 77h1v6h-1zM233 77h1v6h-1zM234 77h1v6h-1zM235 77h1v35h-1zM236 108h1v117h-1zM237 224h1v31h-1zM238 216h1v36h-1zM239 165h1v52h-1zM240 126h1v43h-1zM241 105h1v28h-1zM242 92h1v17h-1zM243 90h1v7h-1zM244 87h1v10h-1zM245 84h1v10h-1zM246 84h1v8h-1zM247 82h1v6h-1zM248 82h1v6h-1zM249 79h1v9h-1zM250 79h1v9h-1zM251 79h1v9h-1zM252 79h1v9h-1zM253 79h1v9h-1zM254 79h1v8h-1zM255 79h1v8h-1zM256 79h1v8h-1zM257 79h1v15h-1zM258 90h1v32h-1zM259 110h1v16h-1zM260 97h1v15h-1zM261 95h1v9h-1zM262 87h1v14h-1zM263 84h1v10h-1zM264 79h1v9h-1zM265 79h1v7h-1zM266 79h1v7h-1zM267 79h1v7h-1zM268 79h1v7h-1zM269 79h1v7h-1zM270 77h1v9h-1zM271 79h1v7h-1zM272 79h1v7h-1zM273 79h1v7h-1zM274 77h1v9h-1zM275 77h1v6h-1zM276 77h1v9h-1zM277 77h1v6h-1zM278 77h1v6h-1zM279 77h1v6h-1zM280 77h1v6h-1zM281 77h1v6h-1zM282 77h1v6h-1zM283 77h1v9h-1zM284 77h1v6h-1zM285 77h1v6h-1zM286 77h1v6h-1zM287 77h1v6h-1zM288 77h1v6h-1zM289 77h1v9h-1zM290 77h1v9h-1zM291 77h1v6h-1zM292 77h1v6h-1zM293 77h1v6h-1zM294 77h1v6h-1zM295 77h1v9h-1zM296 77h1v6h-1zM297 77h1v6h-1zM298 77h1v6h-1zM299 77h1v6h-1zM300 77h1v6h-1zM301 77h1v6h-1zM302 77h1v6h-1zM303 75h1v8h-1zM304 75h1v8h-1zM305 77h1v6h-1zM306 77h1v6h-1zM307 77h1v6h-1zM308 77h1v6h-1zM309 74h1v9h-1zM310 77h1v11h-1zM311 77h1v6h-1zM312 74h1v9h-1zM313 77h1v6h-1zM314 77h1v8h-1zM315 77h1v6h-1zM316 77h1v6h-1zM317 77h1v6h-1zM318 77h1v9h-1zM319 77h1v9h-1zM320 77h1v6h-1zM321 77h1v6h-1zM322 77h1v6h-1zM323 77h1v6h-1zM324 77h1v9h-1zM325 77h1v6h-1zM326 77h1v6h-1zM327 77h1v6h-1zM328 77h1v6h-1zM329 77h1v6h-1zM330 77h1v9h-1zM331 77h1v9h-1zM332 77h1v9h-1zM333 77h1v6h-1zM334 77h1v6h-1zM335 77h1v6h-1zM336 77h1v6h-1zM337 77h1v9h-1zM338 77h1v9h-1zM339 77h1v6h-1zM340 77h1v6h-1zM341 77h1v6h-1zM342 77h1v6h-1zM343 77h1v6h-1zM344 77h1v6h-1zM345 77h1v6h-1zM346 77h1v6h-1zM347 77h1v6h-1zM348 77h1v6h-1zM349 77h1v6h-1zM350 77h1v9h-1zM351 77h1v9h-1zM352 77h1v6h-1zM353 77h1v6h-1zM354 77h1v11h-1zM355 77h1v11h-1zM356 77h1v6h-1zM357 77h1v9h-1zM358 77h1v9h-1zM359 74h1v9h-1zM360 77h1v6h-1zM361 77h1v6h-1zM362 77h1v6h-1zM363 77h1v6h-1zM364 77h1v6h-1zM365 77h1v8h-1zM366 77h1v6h-1zM367 77h1v6h-1zM368 77h1v8h-1zM369 77h1v9h-1zM370 77h1v6h-1zM371 77h1v8h-1zM372 77h1v8h-1zM373 77h1v9h-1zM374 74h1v9h-1zM375 74h1v9h-1zM376 77h1v6h-1zM377 77h1v6h-1zM378 77h1v9h-1zM379 77h1v9h-1zM380 77h1v6h-1zM381 77h1v6h-1zM382 77h1v9h-1zM383 77h1v6h-1zM384 77h1v9h-1zM385 77h1v11h-1zM386 77h1v6h-1zM387 77h1v6h-1zM388 77h1v6h-1zM389 77h1v6h-1zM390 77h1v6h-1zM391 77h1v6h-1zM392 77h1v6h-1zM393 77h1v9h-1zM394 77h1v9h-1zM395 77h1v6h-1zM396 77h1v9h-1zM397 77h1v9h-1zM398 77h1v6h-1zM399 77h1v6h-1zM400 77h1v6h-1zM401 77h1v6h-1zM402 77h1v11h-1zM403 77h1v11h-1zM404 77h1v11h-1zM405 77h1v9h-1zM406 77h1v6h-1zM407 77h1v6h-1zM408 77h1v6h-1zM409 77h1v6h-1zM410 77h1v6h-1zM411 77h1v9h-1zM412 77h1v6h-1zM413 77h1v6h-1zM414 77h1v8h-1zM415 77h1v8h-1zM416 77h1v6h-1zM417 77h1v6h-1zM418 77h1v6h-1zM419 77h1v9h-1zM420 77h1v6h-1zM421 74h1v9h-1zM422 77h1v9h-1zM423 77h1v6h-1zM424 77h1v6h-1zM425 77h1v6h-1zM426 77h1v6h-1zM427 74h1v9h-1zM428 77h1v9h-1zM429 77h1v6h-1zM430 77h1v6h-1zM431 77h1v6h-1zM432 77h1v11h-1zM433 77h1v6h-1zM434 77h1v6h-1zM435 77h1v6h-1zM436 77h1v6h-1zM437 77h1v9h-1zM438 77h1v6h-1zM439 77h1v6h-1zM440 77h1v6h-1zM441 77h1v8h-1zM442 77h1v6h-1zM443 77h1v6h-1zM444 77h1v6h-1zM445 77h1v6h-1zM446 77h1v6h-1zM447 77h1v6h-1zM448 77h1v6h-1zM449 77h1v6h-1zM450 77h1v6h-1zM451 77h1v6h-1zM452 77h1v6h-1zM453 77h1v6h-1zM454 77h1v6h-1zM455 77h1v6h-1zM456 77h1v6h-1zM457 75h1v8h-1zM458 77h1v11h-1zM459 77h1v6h-1zM460 77h1v6h-1zM461 77h1v6h-1zM462 77h1v9h-1zM463 74h1v9h-1zM464 74h1v9h-1zM465 77h1v9h-1zM466 77h1v8h-1zM467 77h1v8h-1zM468 77h1v6h-1zM469 74h1v9h-1zM470 77h1v6h-1zM471 77h1v6h-1zM472 74h1v9h-1zM473 77h1v6h-1zM474 77h1v6h-1zM475 77h1v6h-1zM476 77h1v9h-1zM477 77h1v6h-1zM478 77h1v6h-1zM479 77h1v6h-1zM480 77h1v6h-1zM481 77h1v6h-1zM482 77h1v6h-1zM483 77h1v6h-1zM484 77h1v6h-1zM485 77h1v6h-1zM486 77h1v8h-1zM487 77h1v8h-1zM488 77h1v8h-1zM489 77h1v6h-1zM490 77h1v6h-1zM491 74h1v9h-1zM492 77h1v6h-1zM493 77h1v6h-1zM494 77h1v6h-1zM495 77h1v6h-1zM496 77h1v6h-1zM497 77h1v8h-1zM498 77h1v6h-1zM499 77h1v6h-1zM500 77h1v6h-1zM501 77h1v6h-1zM502 77h1v8h-1zM503 77h1v9h-1zM504 77h1v6h-1zM505 77h1v6h-1zM506 77h1v8h-1zM507 77h1v6h-1zM508 77h1v6h-1zM509 77h1v6h-1zM510 77h1v9h-1zM511 77h1v6h-1zM512 77h1v8h-1zM513 77h1v8h-1zM514 77h1v6h-1zM515 77h1v6h-1zM516 77h1v6h-1zM517 74h1v9h-1zM518 77h1v6h-1zM519 75h1v8h-1zM520 77h1v9h-1zM521 77h1v9h-1zM522 77h1v6h-1zM523 77h1v8h-1zM524 77h1v6h-1zM525 77h1v6h-1zM526 77h1v6h-1zM527 77h1v6h-1zM528 77h1v6h-1zM529 77h1v9h-1zM530 77h1v6h-1zM531 77h1v6h-1zM532 77h1v6h-1zM533 77h1v11h-1zM534 77h1v11h-1zM535 77h1v6h-1zM536 77h1v6h-1zM537 75h1v8h-1zM538 74h1v9h-1zM539 77h1v6h-1zM540 77h1v9h-1zM541 77h1v9h-1zM542 77h1v6h-1zM543 77h1v6h-1zM544 77h1v6h-1zM545 74h1v9h-1zM546 74h1v9h-1zM547 77h1v9h-1zM548 77h1v6h-1zM549 77h1v9h-1zM550 77h1v9h-1zM551 77h1v6h-1zM552 77h1v6h-1zM553 77h1v6h-1zM554 77h1v11h-1zM555 77h1v11h-1zM556 77h1v6h-1zM557 77h1v6h-1zM558 77h1v6h-1zM559 77h1v6h-1zM560 77h1v6h-1zM561 77h1v11h-1zM562 77h1v11h-1zM563 77h1v6h-1zM564 77h1v6h-1zM565 77h1v6h-1zM566 77h1v6h-1zM567 77h1v6h-1zM568 77h1v6h-1zM569 77h1v6h-1zM570 75h1v8h-1zM571 77h1v6h-1zM572 77h1v11h-1zM573 77h1v6h-1zM574 77h1v6h-1zM575 77h1v6h-1zM576 74h1v9h-1zM577 77h1v6h-1zM578 77h1v6h-1zM579 77h1v6h-1zM580 77h1v6h-1zM581 77h1v6h-1zM582 77h1v9h-1zM583 77h1v6h-1zM584 77h1v6h-1zM585 77h1v6h-1zM586 77h1v6h-1zM587 77h1v11h-1zM588 77h1v6h-1zM589 77h1v6h-1zM590 77h1v8h-1zM591 77h1v8h-1zM592 77h1v6h-1zM593 77h1v6h-1zM594 77h1v6h-1zM595 77h1v6h-1zM596 77h1v6h-1zM597 77h1v6h-1zM598 77h1v6h-1zM599 77h1v6h-1zM600 77h1v6h-1zM601 75h1v8h-1zM602 77h1v6h-1zM603 77h1v9h-1zM604 77h1v9h-1zM605 77h1v6h-1zM606 77h1v6h-1zM607 77h1v9h-1zM608 77h1v6h-1zM609 77h1v6h-1zM610 77h1v6h-1zM611 77h1v6h-1zM612 77h1v6h-1zM613 77h1v6h-1zM614 77h1v6h-1zM615 77h1v8h-1zM616 77h1v8h-1zM617 77h1v6h-1zM618 77h1v6h-1zM619 77h1v6h-1zM620 77h1v8h-1zM621 77h1v8h-1zM622 77h1v6h-1zM623 77h1v6h-1zM624 77h1v6h-1zM625 74h1v9h-1zM626 77h1v8h-1zM627 77h1v9h-1zM628 77h1v9h-1zM629 77h1v6h-1zM630 77h1v8h-1zM631 77h1v8h-1zM632 77h1v6h-1zM633 77h1v6h-1zM634 77h1v6h-1zM635 77h1v6h-1zM636 77h1v9h-1zM637 77h1v9h-1zM638 77h1v6h-1zM639 77h1v6h-1zM640 77h1v6h-1zM641 77h1v6h-1zM642 77h1v6h-1zM643 77h1v6h-1zM644 77h1v6h-1zM645 77h1v8h-1zM646 77h1v6h-1zM647 77h1v6h-1zM648 77h1v6h-1zM649 77h1v6h-1zM650 74h1v9h-1zM651 77h1v6h-1zM652 77h1v6h-1zM653 77h1v6h-1zM654 77h1v6h-1zM655 77h1v6h-1zM656 77h1v6h-1zM657 77h1v9h-1zM658 77h1v9h-1zM659 77h1v6h-1zM660 77h1v9h-1zM661 77h1v6h-1zM662 77h1v6h-1zM663 77h1v6h-1zM664 77h1v6h-1zM665 77h1v9h-1zM666 77h1v9h-1zM667 77h1v6h-1zM668 77h1v6h-1zM669 77h1v9h-1zM670 74h1v9h-1zM671 77h1v6h-1zM672 77h1v6h-1zM673 77h1v9h-1zM674 74h1v9h-1zM675 77h1v6h-1zM676 77h1v8h-1zM677 77h1v9h-1zM678 77h1v6h-1zM679 77h1v6h-1zM680 77h1v6h-1zM681 75h1v8h-1zM682 74h1v9h-1zM683 77h1v6h-1zM684 77h1v6h-1zM685 77h1v6h-1zM686 77h1v6h-1zM687 77h1v11h-1zM688 77h1v11h-1zM689 77h1v6h-1zM690 77h1v8h-1zM691 77h1v6h-1zM692 77h1v6h-1zM693 77h1v6h-1zM694 77h1v6h-1zM695 77h1v6h-1zM696 77h1v8h-1zM697 77h1v8h-1zM698 77h1v6h-1zM699 77h1v6h-1zM700 77h1v6h-1zM701 77h1v6h-1zM702 77h1v8h-1zM703 77h1v8h-1zM704 77h1v6h-1zM705 77h1v6h-1zM706 77h1v6h-1zM707 77h1v6h-1zM708 77h1v6h-1zM709 77h1v6h-1zM710 77h1v6h-1zM711 77h1v6h-1zM712 77h1v6h-1zM713 77h1v6h-1zM714 77h1v8h-1zM715 77h1v6h-1zM716 77h1v6h-1zM717 77h1v6h-1zM718 77h1v6h-1zM719 77h1v6h-1zM720 77h1v6h-1zM721 77h1v6h-1zM722 77h1v6h-1zM723 77h1v6h-1zM724 77h1v9h-1zM725 77h1v6h-1zM726 77h1v6h-1zM727 77h1v6h-1zM728 77h1v6h-1zM729 77h1v6h-1zM730 77h1v6h-1zM731 74h1v9h-1zM732 77h1v6h-1zM733 77h1v6h-1zM734 77h1v6h-1zM735 77h1v6h-1zM736 77h1v11h-1zM737 77h1v6h-1zM738 77h1v6h-1zM739 77h1v6h-1zM740 77h1v6h-1zM741 77h1v6h-1zM742 77h1v9h-1zM743 77h1v6h-1zM744 77h1v6h-1zM745 77h1v6h-1zM746 75h1v8h-1zM747 77h1v6h-1zM748 77h1v6h-1zM749 77h1v6h-1zM750 77h1v6h-1zM751 77h1v9h-1zM752 77h1v9h-1zM753 77h1v6h-1zM754 77h1v8h-1zM755 77h1v6h-1zM756 77h1v6h-1zM757 77h1v11h-1zM758 77h1v6h-1zM759 77h1v6h-1zM760 74h1v9h-1zM761 77h1v6h-1zM762 77h1v6h-1zM763 77h1v6h-1zM764 77h1v6h-1zM765 77h1v6h-1zM766 77h1v9h-1zM767 77h1v11h-1zM768 77h1v6h-1zM769 77h1v6h-1zM770 77h1v6h-1zM771 74h1v9h-1zM772 77h1v11h-1zM773 77h1v6h-1zM774 77h1v6h-1zM775 77h1v8h-1zM776 77h1v6h-1zM777 77h1v8h-1zM778 77h1v8h-1zM779 77h1v6h-1zM780 77h1v6h-1zM781 77h1v8h-1zM782 77h1v8h-1zM783 77h1v6h-1zM784 77h1v6h-1zM785 77h1v6h-1zM786 77h1v6h-1zM787 77h1v6h-1zM788 74h1v9h-1zM789 77h1v6h-1zM790 77h1v9h-1zM791 77h1v9h-1zM792 77h1v6h-1zM793 77h1v6h-1zM794 77h1v6h-1zM795 77h1v6h-1zM796 74h1v9h-1zM797 74h1v9h-1zM798 77h1v6h-1zM799 77h1v6h-1zM800 77h1v6h-1zM801 77h1v6h-1zM802 77h1v6h-1zM803 77h1v6h-1zM804 77h1v9h-1zM805 77h1v6h-1zM806 77h1v6h-1zM807 77h1v8h-1zM808 77h1v8h-1zM809 75h1v8h-1zM810 75h1v8h-1zM811 77h1v6h-1zM812 77h1v9h-1zM813 77h1v8h-1zM814 77h1v8h-1zM815 77h1v6h-1zM816 77h1v6h-1zM817 77h1v6h-1zM818 77h1v6h-1zM819 77h1v9h-1zM820 77h1v9h-1zM821 77h1v6h-1zM822 77h1v9h-1zM823 77h1v6h-1zM824 77h1v6h-1zM825 77h1v6h-1zM826 77h1v6h-1zM827 77h1v6h-1zM828 77h1v6h-1zM829 77h1v6h-1zM830 77h1v6h-1zM831 77h1v6h-1zM832 77h1v6h-1zM833 77h1v6h-1zM834 77h1v6h-1zM835 77h1v8h-1zM836 77h1v8h-1zM837 77h1v6h-1zM838 77h1v6h-1zM839 77h1v6h-1zM840 77h1v6h-1zM841 77h1v6h-1zM842 77h1v6h-1zM843 77h1v6h-1zM844 77h1v6h-1zM845 77h1v6h-1zM846 77h1v6h-1zM847 77h1v6h-1zM848 77h1v6h-1zM849 77h1v6h-1zM850 77h1v6h-1zM851 74h1v9h-1zM852 74h1v9h-1zM853 74h1v9h-1zM854 77h1v8h-1zM855 77h1v6h-1zM856 74h1v9h-1zM857 77h1v6h-1zM858 77h1v6h-1zM859 77h1v6h-1zM860 77h1v6h-1zM861 77h1v6h-1zM862 77h1v6h-1zM863 77h1v6h-1zM864 77h1v6h-1zM865 77h1v6h-1zM866 77h1v6h-1zM867 77h1v6h-1zM868 77h1v8h-1zM869 77h1v6h-1zM870 77h1v6h-1zM871 77h1v8h-1zM872 77h1v6h-1zM873 77h1v6h-1zM874 74h1v9h-1zM875 77h1v6h-1zM876 77h1v6h-1zM877 77h1v6h-1zM878 77h1v6h-1zM879 77h1v6h-1zM880 77h1v6h-1zM881 77h1v6h-1zM882 77h1v9h-1zM883 77h1v6h-1zM884 77h1v6h-1zM885 77h1v6h-1zM886 77h1v8h-1zM887 77h1v8h-1zM888 77h1v6h-1zM889 77h1v6h-1zM890 77h1v6h-1zM891 77h1v6h-1zM892 77h1v6h-1zM893 77h1v6h-1zM894 77h1v6h-1zM895 77h1v8h-1zM896 77h1v8h-1zM897 77h1v6h-1zM898 77h1v6h-1zM899 77h1v6h-1zM900 77h1v6h-1zM901 77h1v6h-1zM902 77h1v6h-1zM903 77h1v6h-1zM904 77h1v6h-1zM905 74h1v9h-1zM906 75h1v8h-1zM907 77h1v6h-1zM908 77h1v6h-1zM909 77h1v6h-1zM910 77h1v6h-1zM911 77h1v6h-1zM912 77h1v6h-1zM913 77h1v6h-1zM914 77h1v6h-1zM915 77h1v9h-1zM916 74h1v9h-1zM917 77h1v6h-1zM918 77h1v6h-1zM919 77h1v8h-1zM920 77h1v9h-1zM921 77h1v9h-1zM922 77h1v6h-1zM923 77h1v6h-1zM924 77h1v6h-1zM925 77h1v6h-1zM926 77h1v9h-1zM927 77h1v6h-1zM928 77h1v6h-1zM929 77h1v6h-1zM930 77h1v6h-1zM931 77h1v6h-1zM932 77h1v6h-1zM933 77h1v6h-1zM934 77h1v6h-1zM935 77h1v6h-1zM936 77h1v6h-1zM937 77h1v6h-1zM938 77h1v6h-1zM939 77h1v6h-1zM940 77h1v6h-1zM941 77h1v6h-1zM942 77h1v6h-1zM943 77h1v8h-1zM944 77h1v8h-1zM945 77h1v9h-1zM946 77h1v9h-1zM947 77h1v6h-1zM948 77h1v6h-1zM949 77h1v6h-1zM950 77h1v6h-1zM951 77h1v11h-1zM952 77h1v9h-1zM953 77h1v9h-1zM954 77h1v9h-1zM955 77h1v6h-1zM956 74h1v9h-1zM957 77h1v9h-1zM958 77h1v9h-1zM959 77h1v8h-1zM960 77h1v6h-1zM961 77h1v11h-1zM962 77h1v6h-1zM963 77h1v9h-1zM964 77h1v9h-1zM965 77h1v6h-1zM966 77h1v6h-1zM967 77h1v9h-1zM968 77h1v9h-1zM969 77h1v6h-1zM970 77h1v9h-1zM971 77h1v9h-1zM972 77h1v6h-1zM973 77h1v6h-1zM974 77h1v9h-1zM975 77h1v9h-1zM976 77h1v9h-1zM977 77h1v9h-1zM978 77h1v6h-1zM979 77h1v6h-1zM980 77h1v6h-1zM981 77h1v11h-1zM982 77h1v11h-1zM983 77h1v6h-1zM984 77h1v6h-1zM985 77h1v6h-1zM986 77h1v9h-1zM987 77h1v6h-1zM988 77h1v6h-1zM989 77h1v6h-1zM990 77h1v6h-1zM991 77h1v6h-1zM992 77h1v6h-1zM993 77h1v6h-1zM994 77h1v6h-1zM995 77h1v8h-1zM996 77h1v8h-1zM997 77h1v6h-1zM998 77h1v6h-1zM999 77h1v6h-1zM1000 77h1v6h-1zM1001 77h1v6h-1zM1002 77h1v6h-1zM1003 77h1v6h-1zM1004 77h1v6h-1zM1005 77h1v6h-1zM1006 77h1v6h-1zM1007 77h1v6h-1zM1008 77h1v6h-1zM1009 77h1v6h-1zM1010 77h1v6h-1zM1011 77h1v9h-1zM1012 77h1v6h-1zM1013 77h1v6h-1zM1014 77h1v9h-1zM1015 77h1v6h-1zM1016 77h1v6h-1zM1017 77h1v9h-1zM1018 77h1v9h-1zM1019 77h1v9h-1zM1020 77h1v9h-1z"/>
<path fill="#e8e8e8" d="M41 17h1v1h-1zM61 17h1v1h-1zM81 17h1v1h-1zM101 17h1v1h-1zM141 17h1v1h-1zM161 17h1v1h-1zM181 17h1v1h-1zM201 17h1v1h-1zM241 17h1v1h-1zM261 17h1v1h-1zM281 17h1v1h-1zM301 17h1v1h-1zM341 17h1v1h-1zM361 17h1v1h-1zM381 17h1v1h-1zM401 17h1v1h-1zM441 17h1v1h-1zM461 17h1v1h-1zM481 17h1v1h-1zM501 17h1v1h-1zM541 17h1v1h-1zM561 17h1v1h-1zM581 17h1v1h-1zM601 17h1v1h-1zM641 17h1v1h-1zM661 17h1v1h-1zM681 17h1v1h-1zM701 17h1v1h-1zM741 17h1v1h-1zM761 17h1v1h-1zM781 17h1v1h-1zM801 17h1v1h-1zM841 17h1v1h-1zM861 17h1v1h-1zM881 17h1v1h-1zM901 17h1v1h-1zM941 17h1v1h-1zM961 17h1v1h-1zM981 17h1v1h-1zM1001 17h1v1h-1zM121 18h1v1h-1zM221 18h1v1h-1zM321 18h1v1h-1zM421 18h1v1h-1zM521 18h1v1h-1zM621 18h1v1h-1zM721 18h1v1h-1zM821 18h1v1h-1zM921 18h1v1h-1zM41 19h1v1h-1zM61 19h1v1h-1zM81 19h1v1h-1zM101 19h1v1h-1zM141 19h1v1h-1zM161 19h1v1h-1zM181 19h1v1h-1zM201 19h1v1h-1zM241 19h1v1h-1zM261 19h1v1h-1zM281 19h1v1h-1zM301 19h1v1h-1zM341 19h1v1h-1zM361 19h1v1h-1zM381 19h1v1h-1zM401 19h1v1h-1zM441 19h1v1h-1zM461 19h1v1h-1zM481 19h1v1h-1zM501 19h1v1h-1zM541 19h1v1h-1zM561 19h1v1h-1zM581 19h1v1h-1zM601 19h1v1h-1zM641 19h1v1h-1zM661 19h1v1h-1zM681 19h1v1h-1zM701 19h1v1h-1zM741 19h1v1h-1zM761 19h1v1h-1zM781 19h1v1h-1zM801 19h1v1h-1zM841 19h1v1h-1zM861 19h1v1h-1zM881 19h1v1h-1zM901 19h1v1h-1zM941 19h1v1h-1zM961 19h1v1h-1zM981 19h1v1h-1zM1001 19h1v1h-1zM121 20h1v1h-1zM221 20h1v1h-1zM321 20h1v1h-1zM421 20h1v1h-1zM521 20h1v1h-1zM621 20h1v1h-1zM721 20h1v1h-1zM821 20h1v1h-1zM921 20h1v1h-1zM121 22h1v1h-1zM221 22h1v1h-1zM321 22h1v1h-1zM421 22h1v1h-1zM521 22h1v1h-1zM621 22h1v1h-1zM721 22h1v1h-1zM821 22h1v1h-1zM921 22h1v1h-1zM521 24h1v1h-1zM521 26h1v1h-1zM521 28h1v1h-1zM21 30h1v1h-1zM23 30h1v1h-1zM121 30h1v1h-1zM221 30h1v1h-1zM321 30h1v1h-1zM421 30h1v1h-1zM518 30h1v1h-1zM520 30h3v1h-3zM524 30h1v1h-1zM621 30h1v1h-1zM721 30h1v1h-1zM821 30h1v1h-1zM921 30h1v1h-1zM1018 30h1v1h-1zM1020 30h1v1h-1zM521 32h1v1h-1zM521 34h1v1h-1zM521 36h1v1h-1zM521 38h1v1h-1zM521 40h1v1h-1zM521 42h1v1h-1zM21 43h1v1h-1zM23 43h1v1h-1zM121 43h1v1h-1zM221 43h1v1h-1zM321 43h1v1h-1zM421 43h1v1h-1zM518 43h1v1h-1zM520 43h3v1h-3zM524 43h1v1h-1zM621 43h1v1h-1zM721 43h1v1h-1zM821 43h1v1h-1zM921 43h1v1h-1zM1018 43h1v1h-1zM1020 43h1v1h-1zM521 44h1v1h-1zM521 46h1v1h-1zM521 48h1v1h-1zM521 50h1v1h-1zM521 52h1v1h-1zM521 54h1v1h-1zM21 56h1v1h-1zM23 56h1v1h-1zM121 56h1v1h-1zM221 56h1v1h-1zM321 56h1v1h-1zM421 56h1v1h-1zM518 56h1v1h-1zM520 56h3v1h-3zM524 56h1v1h-1zM621 56h1v1h-1zM721 56h1v1h-1zM821 56h1v1h-1zM921 56h1v1h-1zM1018 56h1v1h-1zM1020 56h1v1h-1zM521 58h1v1h-1zM521 60h1v1h-1zM521 62h1v1h-1zM521 64h1v1h-1zM521 66h1v1h-1zM521 68h1v1h-1zM21 69h1v1h-1zM23 69h1v1h-1zM121 69h1v1h-1zM221 69h1v1h-1zM321 69h1v1h-1zM421 69h1v1h-1zM518 69h1v1h-1zM520 69h3v1h-3zM524 69h1v1h-1zM621 69h1v1h-1zM721 69h1v1h-1zM821 69h1v1h-1zM921 69h1v1h-1zM1018 69h1v1h-1zM1020 69h1v1h-1zM521 70h1v1h-1zM521 72h1v1h-1zM521 74h1v1h-1zM521 76h1v1h-1zM521 78h1v1h-1zM521 80h1v1h-1zM521 81h1v1h-1zM22 82h1v1h-1zM24 82h1v1h-1zM26 82h1v1h-1zM41 82h1v1h-1zM61 82h1v1h-1zM81 82h1v1h-1zM101 82h1v1h-1zM121 82h1v1h-1zM141 82h1v1h-1zM161 82h1v1h-1zM181 82h1v1h-1zM201 82h1v1h-1zM221 82h1v1h-1zM241 82h1v1h-1zM261 82h1v1h-1zM281 82h1v1h-1zM301 82h1v1h-1zM321 82h1v1h-1zM341 82h1v1h-1zM361 82h1v1h-1zM381 82h1v1h-1zM401 82h1v1h-1zM421 82h1v1h-1zM441 82h1v1h-1zM461 82h1v1h-1zM481 82h1v1h-1zM501 82h1v1h-1zM515 82h1v1h-1zM517 82h1v1h-1zM519 82h1v1h-1zM521 82h1v1h-1zM523 82h1v1h-1zM525 82h1v1h-1zM527 82h1v1h-1zM541 82h1v1h-1zM561 82h1v1h-1zM581 82h1v1h-1zM601 82h1v1h-1zM621 82h1v1h-1zM641 82h1v1h-1zM661 82h1v1h-1zM681 82h1v1h-1zM701 82h1v1h-1zM721 82h1v1h-1zM741 82h1v1h-1zM761 82h1v1h-1zM781 82h1v1h-1zM801 82h1v1h-1zM821 82h1v1h-1zM841 82h1v1h-1zM861 82h1v1h-1zM881 82h1v1h-1zM901 82h1v1h-1zM921 82h1v1h-1zM941 82h1v1h-1zM961 82h1v1h-1zM981 82h1v1h-1zM1001 82h1v1h-1zM1015 82h1v1h-1zM1017 82h1v1h-1zM1019 82h1v1h-1zM521 83h1v1h-1zM521 84h1v1h-1zM521 86h1v1h-1zM521 88h1v1h-1zM521 90h1v1h-1zM521 92h1v1h-1zM521 94h1v1h-1zM21 95h1v1h-1zM23 95h1v1h-1zM121 95h1v1h-1zM221 95h1v1h-1zM321 95h1v1h-1zM421 95h1v1h-1zM518 95h1v1h-1zM520 95h3v1h-3zM524 95h1v1h-1zM621 95h1v1h-1zM721 95h1v1h-1zM821 95h1v1h-1zM921 95h1v1h-1zM1018 95h1v1h-1zM1020 95h1v1h-1zM521 96h1v1h-1zM521 98h1v1h-1zM521 100h1v1h-1zM521 102h1v1h-1zM521 104h1v1h-1zM521 106h1v1h-1zM21 108h1v1h-1zM23 108h1v1h-1zM121 108h1v1h-1zM221 108h1v1h-1zM321 108h1v1h-1zM421 108h1v1h-1zM518 108h1v1h-1zM520 108h3v1h-3zM524 108h1v1h-1zM621 108h1v1h-1zM721 108h1v1h-1zM821 108h1v1h-1zM921 108h1v1h-1zM1018 108h1v1h-1zM1020 108h1v1h-1zM521 110h1v1h-1zM521 112h1v1h-1zM521 114h1v1h-1zM521 116h1v1h-1zM521 118h1v1h-1zM521 120h1v1h-1zM21 121h1v1h-1zM23 121h1v1h-1zM121 121h1v1h-1zM221 121h1v1h-1zM321 121h1v1h-1zM421 121h1v1h-1zM518 121h1v1h-1zM520 121h3v1h-3zM524 121h1v1h-1zM621 121h1v1h-1zM721 121h1v1h-1zM821 121h1v1h-1zM921 121h1v1h-1zM1018 121h1v1h-1zM1020 121h1v1h-1zM521 122h1v1h-1zM521 124h1v1h-1zM521 126h1v1h-1zM521 128h1v1h-1zM521 130h1v1h-1zM521 132h1v1h-1zM21 134h1v1h-1zM23 134h1v1h-1zM121 134h1v1h-1zM221 134h1v1h-1zM321 134h1v1h-1zM421 134h1v1h-1zM518 134h1v1h-1zM520 134h3v1h-3zM524 134h1v1h-1zM621 134h1v1h-1zM721 134h1v1h-1zM821 134h1v1h-1zM921 134h1v1h-1zM1018 134h1v1h-1zM1020 134h1v1h-1zM521 136h1v1h-1zM521 138h1v1h-1zM521 140h1v1h-1zM521 142h1v1h-1zM521 144h1v1h-1zM521 146h1v1h-1zM22 147h1v1h-1zM24 147h1v1h-1zM26 147h1v1h-1zM41 147h1v1h-1zM61 147h1v1h-1zM81 147h1v1h-1zM101 147h1v1h-1zM121 147h1v1h-1zM141 147h1v1h-1zM161 147h1v1h-1zM181 147h1v1h-1zM201 147h1v1h-1zM221 147h1v1h-1zM241 147h1v1h-1zM261 147h1v1h-1zM281 147h1v1h-1zM301 147h1v1h-1zM321 147h1v1h-1zM341 147h1v1h-1zM361 147h1v1h-1zM381 147h1v1h-1zM401 147h1v1h-1zM421 147h1v1h-1zM441 147h1v1h-1zM461 147h1v1h-1zM481 147h1v1h-1zM501 147h1v1h-1zM515 147h1v1h-1zM517 147h1v1h-1zM519 147h1v1h-1zM521 147h1v1h-1zM523 147h1v1h-1zM525 147h1v1h-1zM527 147h1v1h-1zM541 147h1v1h-1zM561 147h1v1h-1zM581 147h1v1h-1zM601 147h1v1h-1zM621 147h1v1h-1zM641 147h1v1h-1zM661 147h1v1h-1zM681 147h1v1h-1zM701 147h1v1h-1zM721 147h1v1h-1zM741 147h1v1h-1zM761 147h1v1h-1zM781 147h1v1h-1zM801 147h1v1h-1zM821 147h1v1h-1zM841 147h1v1h-1zM861 147h1v1h-1zM881 147h1v1h-1zM901 147h1v1h-1zM921 147h1v1h-1zM941 147h1v1h-1zM961 147h1v1h-1zM981 147h1v1h-1zM1001 147h1v1h-1zM1015 147h1v1h-1zM1017 147h1v1h-1zM1019 147h1v1h-1zM521 148h1v1h-1zM521 150h1v1h-1zM521 152h1v1h-1zM521 154h1v1h-1zM521 156h1v1h-1zM521 158h1v1h-1zM21 160h1v1h-1zM23 160h1v1h-1zM121 160h1v1h-1zM221 160h1v1h-1zM321 160h1v1h-1zM421 160h1v1h-1zM518 160h1v1h-1zM520 160h3v1h-3zM524 160h1v1h-1zM621 160h1v1h-1zM721 160h1v1h-1zM821 160h1v1h-1zM921 160h1v1h-1zM1018 160h1v1h-1zM1020 160h1v1h-1zM521 162h1v1h-1zM521 164h1v1h-1zM521 166h1v1h-1zM521 168h1v1h-1zM521 170h1v1h-1zM521 172h1v1h-1zM21 173h1v1h-1zM23 173h1v1h-1zM121 173h1v1h-1zM221 173h1v1h-1zM321 173h1v1h-1zM421 173h1v1h-1zM518 173h1v1h-1zM520 173h3v1h-3zM524 173h1v1h-1zM621 173h1v1h-1zM721 173h1v1h-1zM821 173h1v1h-1zM921 173h1v1h-1zM1018 173h1v1h-1zM1020 173h1v1h-1zM521 174h1v1h-1zM521 176h1v1h-1zM521 178h1v1h-1zM521 180h1v1h-1zM521 182h1v1h-1zM521 184h1v1h-1zM21 186h1v1h-1zM23 186h1v1h-1zM121 186h1v1h-1zM221 186h1v1h-1zM321 186h1v1h-1zM421 186h1v1h-1zM518 186h1v1h-1zM520 186h3v1h-3zM524 186h1v1h-1zM621 186h1v1h-1zM721 186h1v1h-1zM821 186h1v1h-1zM921 186h1v1h-1zM1018 186h1v1h-1zM1020 186h1v1h-1zM521 188h1v1h-1zM521 190h1v1h-1zM521 192h1v1h-1zM521 194h1v1h-1zM521 196h1v1h-1zM521 198h1v1h-1zM21 199h1v1h-1zM23 199h1v1h-1zM121 199h1v1h-1zM221 199h1v1h-1zM321 199h1v1h-1zM421 199h1v1h-1zM518 199h1v1h-1zM520 199h3v1h-3zM524 199h1v1h-1zM621 199h1v1h-1zM721 199h1v1h-1zM821 199h1v1h-1zM921 199h1v1h-1zM1018 199h1v1h-1zM1020 199h1v1h-1zM521 200h1v1h-1zM521 202h1v1h-1zM521 204h1v1h-1zM521 206h1v1h-1zM521 208h1v1h-1zM521 210h1v1h-1zM521 211h1v1h-1zM22 212h1v1h-1zM24 212h1v1h-1zM26 212h1v1h-1zM41 212h1v1h-1zM61 212h1v1h-1zM81 212h1v1h-1zM101 212h1v1h-1zM121 212h1v1h-1zM141 212h1v1h-1zM161 212h1v1h-1zM181 212h1v1h-1zM201 212h1v1h-1zM221 212h1v1h-1zM241 212h1v1h-1zM261 212h1v1h-1zM281 212h1v1h-1zM301 212h1v1h-1zM321 212h1v1h-1zM341 212h1v1h-1zM361 212h1v1h-1zM381 212h1v1h-1zM401 212h1v1h-1zM421 212h1v1h-1zM441 212h1v1h-1zM461 212h1v1h-1zM481 212h1v1h-1zM501 212h1v1h-1zM515 212h1v1h-1zM517 212h1v1h-1zM519 212h1v1h-1zM521 212h1v1h-1zM523 212h1v1h-1zM525 212h1v1h-1zM527 212h1v1h-1zM541 212h1v1h-1zM561 212h1v1h-1zM581 212h1v1h-1zM601 212h1v1h-1zM621 212h1v1h-1zM641 212h1v1h-1zM661 212h1v1h-1zM681 212h1v1h-1zM701 212h1v1h-1zM721 212h1v1h-1zM741 212h1v1h-1zM761 212h1v1h-1zM781 212h1v1h-1zM801 212h1v1h-1zM821 212h1v1h-1zM841 212h1v1h-1zM861 212h1v1h-1zM881 212h1v1h-1zM901 212h1v1h-1zM921 212h1v1h-1zM941 212h1v1h-1zM961 212h1v1h-1zM981 212h1v1h-1zM1001 212h1v1h-1zM1015 212h1v1h-1zM1017 212h1v1h-1zM1019 212h1v1h-1zM521 213h1v1h-1zM521 214h1v1h-1zM521 216h1v1h-1zM521 218h1v1h-1zM521 220h1v1h-1zM521 222h1v1h-1zM521 224h1v1h-1zM21 225h1v1h-1zM23 225h1v1h-1zM121 225h1v1h-1zM221 225h1v1h-1zM321 225h1v1h-1zM421 225h1v1h-1zM518 225h1v1h-1zM520 225h3v1h-3zM524 225h1v1h-1zM621 225h1v1h-1zM721 225h1v1h-1zM821 225h1v1h-1zM921 225h1v1h-1zM1018 225h1v1h-1zM1020 225h1v1h-1zM521 226h1v1h-1zM521 228h1v1h-1zM521 230h1v1h-1zM521 232h1v1h-1zM521 234h1v1h-1zM521 236h1v1h-1zM21 238h1v1h-1zM23 238h1v1h-1zM121 238h1v1h-1zM221 238h1v1h-1zM321 238h1v1h-1zM421 238h1v1h-1zM518 238h1v1h-1zM520 238h3v1h-3zM524 238h1v1h-1zM621 238h1v1h-1zM721 238h1v1h-1zM821 238h1v1h-1zM921 238h1v1h-1zM1018 238h1v1h-1zM1020 238h1v1h-1zM521 240h1v1h-1zM521 242h1v1h-1zM521 244h1v1h-1zM521 246h1v1h-1zM521 248h1v1h-1zM521 250h1v1h-1zM21 251h1v1h-1zM23 251h1v1h-1zM121 251h1v1h-1zM221 251h1v1h-1zM321 251h1v1h-1zM421 251h1v1h-1zM518 251h1v1h-1zM520 251h3v1h-3zM524 251h1v1h-1zM621 251h1v1h-1zM721 251h1v1h-1zM821 251h1v1h-1zM921 251h1v1h-1zM1018 251h1v1h-1zM1020 251h1v1h-1zM521 252h1v1h-1zM521 254h1v1h-1zM521 256h1v1h-1zM521 258h1v1h-1zM521 260h1v1h-1zM521 262h1v1h-1zM21 264h1v1h-1zM23 264h1v1h-1zM121 264h1v1h-1zM221 264h1v1h-1zM321 264h1v1h-1zM421 264h1v1h-1zM518 264h1v1h-1zM520 264h3v1h-3zM524 264h1v1h-1zM621 264h1v1h-1zM721 264h1v1h-1zM821 264h1v1h-1zM921 264h1v1h-1zM1018 264h1v1h-1zM1020 264h1v1h-1zM521 266h1v1h-1zM521 268h1v1h-1zM521 270h1v1h-1zM521 272h1v1h-1zM521 274h1v1h-1zM521 276h1v1h-1zM22 277h1v1h-1zM24 277h1v1h-1zM26 277h1v1h-1zM41 277h1v1h-1zM61 277h1v1h-1zM81 277h1v1h-1zM101 277h1v1h-1zM121 277h1v1h-1zM141 277h1v1h-1zM161 277h1v1h-1zM181 277h1v1h-1zM201 277h1v1h-1zM221 277h1v1h-1zM241 277h1v1h-1zM261 277h1v1h-1zM281 277h1v1h-1zM301 277h1v1h-1zM321 277h1v1h-1zM341 277h1v1h-1zM361 277h1v1h-1zM381 277h1v1h-1zM401 277h1v1h-1zM421 277h1v1h-1zM441 277h1v1h-1zM461 277h1v1h-1zM481 277h1v1h-1zM501 277h1v1h-1zM515 277h1v1h-1zM517 277h1v1h-1zM519 277h1v1h-1zM521 277h1v1h-1zM523 277h1v1h-1zM525 277h1v1h-1zM527 277h1v1h-1zM541 277h1v1h-1zM561 277h1v1h-1zM581 277h1v1h-1zM601 277h1v1h-1zM621 277h1v1h-1zM641 277h1v1h-1zM661 277h1v1h-1zM681 277h1v1h-1zM701 277h1v1h-1zM721 277h1v1h-1zM741 277h1v1h-1zM761 277h1v1h-1zM781 277h1v1h-1zM801 277h1v1h-1zM821 277h1v1h-1zM841 277h1v1h-1zM861 277h1v1h-1zM881 277h1v1h-1zM901 277h1v1h-1zM921 277h1v1h-1zM941 277h1v1h-1zM961 277h1v1h-1zM981 277h1v1h-1zM1001 277h1v1h-1zM1015 277h1v1h-1zM1017 277h1v1h-1zM1019 277h1v1h-1zM521 278h1v1h-1zM521 280h1v1h-1zM521 282h1v1h-1zM521 284h1v1h-1zM521 286h1v1h-1zM521 288h1v1h-1zM21 290h1v1h-1zM23 290h1v1h-1zM121 290h1v1h-1zM221 290h1v1h-1zM321 290h1v1h-1zM421 290h1v1h-1zM518 290h1v1h-1zM520 290h3v1h-3zM524 290h1v1h-1zM621 290h1v1h-1zM721 290h1v1h-1zM821 290h1v1h-1zM921 290h1v1h-1zM1018 290h1v1h-1zM1020 290h1v1h-1zM521 292h1v1h-1zM521 294h1v1h-1zM521 296h1v1h-1zM521 298h1v1h-1zM521 300h1v1h-1zM521 302h1v1h-1zM21 303h1v1h-1zM23 303h1v1h-1zM121 303h1v1h-1zM221 303h1v1h-1zM321 303h1v1h-1zM421 303h1v1h-1zM518 303h1v1h-1zM520 303h3v1h-3zM524 303h1v1h-1zM621 303h1v1h-1zM721 303h1v1h-1zM821 303h1v1h-1zM921 303h1v1h-1zM1018 303h1v1h-1zM1020 303h1v1h-1zM521 304h1v1h-1zM521 306h1v1h-1zM521 308h1v1h-1zM521 310h1v1h-1zM521 312h1v1h-1zM521 314h1v1h-1zM21 316h1v1h-1zM23 316h1v1h-1zM121 316h1v1h-1zM221 316h1v1h-1zM321 316h1v1h-1zM421 316h1v1h-1zM518 316h1v1h-1zM520 316h3v1h-3zM524 316h1v1h-1zM621 316h1v1h-1zM721 316h1v1h-1zM821 316h1v1h-1zM921 316h1v1h-1zM1018 316h1v1h-1zM1020 316h1v1h-1zM521 318h1v1h-1zM521 320h1v1h-1zM521 322h1v1h-1zM521 324h1v1h-1zM521 326h1v1h-1zM521 328h1v1h-1zM21 329h1v1h-1zM23 329h1v1h-1zM121 329h1v1h-1zM221 329h1v1h-1zM321 329h1v1h-1zM421 329h1v1h-1zM518 329h1v1h-1zM520 329h3v1h-3zM524 329h1v1h-1zM621 329h1v1h-1zM721 329h1v1h-1zM821 329h1v1h-1zM921 329h1v1h-1zM1018 329h1v1h-1zM1020 329h1v1h-1zM521 330h1v1h-1zM521 332h1v1h-1zM521 334h1v1h-1zM121 336h1v1h-1zM221 336h1v1h-1zM321 336h1v1h-1zM421 336h1v1h-1zM521 336h1v1h-1zM621 336h1v1h-1zM721 336h1v1h-1zM821 336h1v1h-1zM921 336h1v1h-1zM121 338h1v1h-1zM221 338h1v1h-1zM321 338h1v1h-1zM421 338h1v1h-1zM521 338h1v1h-1zM621 338h1v1h-1zM721 338h1v1h-1zM821 338h1v1h-1zM921 338h1v1h-1zM41 339h1v1h-1zM61 339h1v1h-1zM81 339h1v1h-1zM101 339h1v1h-1zM141 339h1v1h-1zM161 339h1v1h-1zM181 339h1v1h-1zM201 339h1v1h-1zM241 339h1v1h-1zM261 339h1v1h-1zM281 339h1v1h-1zM301 339h1v1h-1zM341 339h1v1h-1zM361 339h1v1h-1zM381 339h1v1h-1zM401 339h1v1h-1zM441 339h1v1h-1zM461 339h1v1h-1zM481 339h1v1h-1zM501 339h1v1h-1zM541 339h1v1h-1zM561 339h1v1h-1zM581 339h1v1h-1zM601 339h1v1h-1zM641 339h1v1h-1zM661 339h1v1h-1zM681 339h1v1h-1zM701 339h1v1h-1zM741 339h1v1h-1zM761 339h1v1h-1zM781 339h1v1h-1zM801 339h1v1h-1zM841 339h1v1h-1zM861 339h1v1h-1zM881 339h1v1h-1zM901 339h1v1h-1zM941 339h1v1h-1zM961 339h1v1h-1zM981 339h1v1h-1zM1001 339h1v1h-1zM121 340h1v1h-1zM221 340h1v1h-1zM321 340h1v1h-1zM421 340h1v1h-1zM521 340h1v1h-1zM621 340h1v1h-1zM721 340h1v1h-1zM821 340h1v1h-1zM921 340h1v1h-1zM41 341h1v1h-1zM61 341h1v1h-1zM81 341h1v1h-1zM101 341h1v1h-1zM141 341h1v1h-1zM161 341h1v1h-1zM181 341h1v1h-1zM201 341h1v1h-1zM241 341h1v1h-1zM261 341h1v1h-1zM281 341h1v1h-1zM301 341h1v1h-1zM341 341h1v1h-1zM361 341h1v1h-1zM381 341h1v1h-1zM401 341h1v1h-1zM441 341h1v1h-1zM461 341h1v1h-1zM481 341h1v1h-1zM501 341h1v1h-1zM541 341h1v1h-1zM561 341h1v1h-1zM581 341h1v1h-1zM601 341h1v1h-1zM641 341h1v1h-1zM661 341h1v1h-1zM681 341h1v1h-1zM701 341h1v1h-1zM741 341h1v1h-1zM761 341h1v1h-1zM781 341h1v1h-1zM801 341h1v1h-1zM841 341h1v1h-1zM861 341h1v1h-1zM881 341h1v1h-1zM901 341h1v1h-1zM941 341h1v1h-1zM961 341h1v1h-1zM981 341h1v1h-1zM1001 341h1v1h-1zM21 342h7v1h-7zM29 342h1v1h-1zM31 342h1v1h-1zM33 342h1v1h-1zM35 342h1v1h-1zM37 342h1v1h-1zM39 342h1v1h-1zM41 342h1v1h-1zM43 342h1v1h-1zM45 342h1v1h-1zM47 342h1v1h-1zM49 342h1v1h-1zM51 342h1v1h-1zM53 342h1v1h-1zM55 342h1v1h-1zM57 342h1v1h-1zM59 342h1v1h-1zM61 342h1v1h-1zM63 342h1v1h-1zM65 342h1v1h-1zM67 342h1v1h-1zM69 342h1v1h-1zM71 342h1v1h-1zM73 342h1v1h-1zM75 342h1v1h-1zM77 342h1v1h-1zM79 342h1v1h-1zM81 342h1v1h-1zM83 342h1v1h-1zM85 342h1v1h-1zM87 342h1v1h-1zM89 342h1v1h-1zM91 342h1v1h-1zM93 342h1v1h-1zM95 342h1v1h-1zM97 342h1v1h-1zM99 342h1v1h-1zM101 342h1v1h-1zM103 342h1v1h-1zM105 342h1v1h-1zM107 342h1v1h-1zM109 342h1v1h-1zM111 342h1v1h-1zM113 342h1v1h-1zM115 342h1v1h-1zM117 342h1v1h-1zM119 342h5v1h-5zM125 342h1v1h-1zM127 342h1v1h-1zM129 342h1v1h-1zM131 342h1v1h-1zM133 342h1v1h-1zM135 342h1v1h-1zM137 342h1v1h-1zM139 342h1v1h-1zM141 342h1v1h-1zM143 342h1v1h-1zM145 342h1v1h-1zM147 342h1v1h-1zM149 342h1v1h-1zM151 342h1v1h-1zM153 342h1v1h-1zM155 342h1v1h-1zM157 342h1v1h-1zM159 342h1v1h-1zM161 342h1v1h-1zM163 342h1v1h-1zM165 342h1v1h-1zM167 342h1v1h-1zM169 342h1v1h-1zM171 342h1v1h-1zM173 342h1v1h-1zM175 342h1v1h-1zM177 342h1v1h-1zM179 342h1v1h-1zM181 342h1v1h-1zM183 342h1v1h-1zM185 342h1v1h-1zM187 342h1v1h-1zM189 342h1v1h-1zM191 342h1v1h-1zM193 342h1v1h-1zM195 342h1v1h-1zM197 342h1v1h-1zM199 342h1v1h-1zM201 342h1v1h-1zM203 342h1v1h-1zM205 342h1v1h-1zM207 342h1v1h-1zM209 342h1v1h-1zM211 342h1v1h-1zM213 342h1v1h-1zM215 342h1v1h-1zM217 342h1v1h-1zM219 342h5v1h-5zM225 342h1v1h-1zM227 342h1v1h-1zM229 342h1v1h-1zM231 342h1v1h-1zM233 342h1v1h-1zM235 342h1v1h-1zM237 342h1v1h-1zM239 342h1v1h-1zM241 342h1v1h-1zM243 342h1v1h-1zM245 342h1v1h-1zM247 342h1v1h-1zM249 342h1v1h-1zM251 342h1v1h-1zM253 342h1v1h-1zM255 342h1v1h-1zM257 342h1v1h-1zM259 342h1v1h-1zM261 342h1v1h-1zM263 342h1v1h-1zM265 342h1v1h-1zM267 342h1v1h-1zM269 342h1v1h-1zM271 342h1v1h-1zM273 342h1v1h-1zM275 342h1v1h-1zM277 342h1v1h-1zM279 342h1v1h-1zM281 342h1v1h-1zM283 342h1v1h-1zM285 342h1v1h-1zM287 342h1v1h-1zM289 342h1v1h-1zM291 342h1v1h-1zM293 342h1v1h-1zM295 342h1v1h-1zM297 342h1v1h-1zM299 342h1v1h-1zM301 342h1v1h-1zM303 342h1v1h-1zM305 342h1v1h-1zM307 342h1v1h-1zM309 342h1v1h-1zM311 342h1v1h-1zM313 342h1v1h-1zM315 342h1v1h-1zM317 342h1v1h-1zM319 342h5v1h-5zM325 342h1v1h-1zM327 342h1v1h-1zM329 342h1v1h-1zM331 342h1v1h-1zM333 342h1v1h-1zM335 342h1v1h-1zM337 342h1v1h-1zM339 342h1v1h-1zM341 342h1v1h-1zM343 342h1v1h-1zM345 342h1v1h-1zM347 342h1v1h-1zM349 342h1v1h-1zM351 342h1v1h-1zM353 342h1v1h-1zM355 342h1v1h-1zM357 342h1v1h-1zM359 342h1v1h-1zM361 342h1v1h-1zM363 342h1v1h-1zM365 342h1v1h-1zM367 342h1v1h-1zM369 342h1v1h-1zM371 342h1v1h-1zM373 342h1v1h-1zM375 342h1v1h-1zM377 342h1v1h-1zM379 342h1v1h-1zM381 342h1v1h-1zM383 342h1v1h-1zM385 342h1v1h-1zM387 342h1v1h-1zM389 342h1v1h-1zM391 342h1v1h-1zM393 342h1v1h-1zM395 342h1v1h-1zM397 342h1v1h-1zM399 342h1v1h-1zM401 342h1v1h-1zM403 342h1v1h-1zM405 342h1v1h-1zM407 342h1v1h-1zM409 342h1v1h-1zM411 342h1v1h-1zM413 342h1v1h-1zM415 342h1v1h-1zM417 342h1v1h-1zM419 342h5v1h-5zM425 342h1v1h-1zM427 342h1v1h-1zM429 342h1v1h-1zM431 342h1v1h-1zM433 342h1v1h-1zM435 342h1v1h-1zM437 342h1v1h-1zM439 342h1v1h-1zM441 342h1v1h-1zM443 342h1v1h-1zM445 342h1v1h-1zM447 342h1v1h-1zM449 342h1v1h-1zM451 342h1v1h-1zM453 342h1v1h-1zM455 342h1v1h-1zM457 342h1v1h-1zM459 342h1v1h-1zM461 342h1v1h-1zM463 342h1v1h-1zM465 342h1v1h-1zM467 342h1v1h-1zM469 342h1v1h-1zM471 342h1v1h-1zM473 342h1v1h-1zM475 342h1v1h-1zM477 342h1v1h-1zM479 342h1v1h-1zM481 342h1v1h-1zM483 342h1v1h-1zM485 342h1v1h-1zM487 342h1v1h-1zM489 342h1v1h-1zM491 342h1v1h-1zM493 342h1v1h-1zM495 342h1v1h-1zM497 342h1v1h-1zM499 342h1v1h-1zM501 342h1v1h-1zM503 342h1v1h-1zM505 342h1v1h-1zM507 342h1v1h-1zM509 342h1v1h-1zM511 342h1v1h-1zM513 342h1v1h-1zM515 342h1v1h-1zM517 342h1v1h-1zM519 342h1v1h-1zM521 342h1v1h-1zM523 342h1v1h-1zM525 342h1v1h-1zM527 342h1v1h-1zM529 342h1v1h-1zM531 342h1v1h-1zM533 342h1v1h-1zM535 342h1v1h-1zM537 342h1v1h-1zM539 342h1v1h-1zM541 342h1v1h-1zM543 342h1v1h-1zM545 342h1v1h-1zM547 342h1v1h-1zM549 342h1v1h-1zM551 342h1v1h-1zM553 342h1v1h-1zM555 342h1v1h-1zM557 342h1v1h-1zM559 342h1v1h-1zM561 342h1v1h-1zM563 342h1v1h-1zM565 342h1v1h-1zM567 342h1v1h-1zM569 342h1v1h-1zM571 342h1v1h-1zM573 342h1v1h-1zM575 342h1v1h-1zM577 342h1v1h-1zM579 342h1v1h-1zM581 342h1v1h-1zM583 342h1v1h-1zM585 342h1v1h-1zM587 342h1v1h-1zM589 342h1v1h-1zM591 342h1v1h-1zM593 342h1v1h-1zM595 342h1v1h-1zM597 342h1v1h-1zM599 342h1v1h-1zM601 342h1v1h-1zM603 342h1v1h-1zM605 342h1v1h-1zM607 342h1v1h-1zM609 342h1v1h-1zM611 342h1v1h-1zM613 342h1v1h-1zM615 342h1v1h-1zM617 342h1v1h-1zM619 342h5v1h-5zM625 342h1v1h-1zM627 342h1v1h-1zM629 342h1v1h-1zM631 342h1v1h-1zM633 342h1v1h-1zM635 342h1v1h-1zM637 342h1v1h-1zM639 342h1v1h-1zM641 342h1v1h-1zM643 342h1v1h-1zM645 342h1v1h-1zM647 342h1v1h-1zM649 342h1v1h-1zM651 342h1v1h-1zM653 342h1v1h-1zM655 342h1v1h-1zM657 342h1v1h-1zM659 342h1v1h-1zM661 342h1v1h-1zM663 342h1v1h-1zM665 342h1v1h-1zM667 342h1v1h-1zM669 342h1v1h-1zM671 342h1v1h-1zM673 342h1v1h-1zM675 342h1v1h-1zM677 342h1v1h-1zM679 342h1v1h-1zM681 342h1v1h-1zM683 342h1v1h-1zM685 342h1v1h-1zM687 342h1v1h-1zM689 342h1v1h-1zM691 342h1v1h-1zM693 342h1v1h-1zM695 342h1v1h-1zM697 342h1v1h-1zM699 342h1v1h-1zM701 342h1v1h-1zM703 342h1v1h-1zM705 342h1v1h-1zM707 342h1v1h-1zM709 342h1v1h-1zM711 342h1v1h-1zM713 342h1v1h-1zM715 342h1v1h-1zM717 342h1v1h-1zM719 342h5v1h-5zM725 342h1v1h-1zM727 342h1v1h-1zM729 342h1v1h-1zM731 342h1v1h-1zM733 342h1v1h-1zM735 342h1v1h-1zM737 342h1v1h-1zM739 342h1v1h-1zM741 342h1v1h-1zM743 342h1v1h-1zM745 342h1v1h-1zM747 342h1v1h-1zM749 342h1v1h-1zM751 342h1v1h-1zM753 342h1v1h-1zM755 342h1v1h-1zM757 342h1v1h-1zM759 342h1v1h-1zM761 342h1v1h-1zM763 342h1v1h-1zM765 342h1v1h-1zM767 342h1v1h-1zM769 342h1v1h-1zM771 342h1v1h-1zM773 342h1v1h-1zM775 342h1v1h-1zM777 342h1v1h-1zM779 342h1v1h-1zM781 342h1v1h-1zM783 342h1v1h-1zM785 342h1v1h-1zM787 342h1v1h-1zM789 342h1v1h-1zM791 342h1v1h-1zM793 342h1v1h-1zM795 342h1v1h-1zM797 342h1v1h-1zM799 342h1v1h-1zM801 342h1v1h-1zM803 342h1v1h-1zM805 342h1v1h-1zM807 342h1v1h-1zM809 342h1v1h-1zM811 342h1v1h-1zM813 342h1v1h-1zM815 342h1v1h-1zM817 342h1v1h-1zM819 342h5v1h-5zM825 342h1v1h-1zM827 342h1v1h-1zM829 342h1v1h-1zM831 342h1v1h-1zM833 342h1v1h-1zM835 342h1v1h-1zM837 342h1v1h-1zM839 342h1v1h-1zM841 342h1v1h-1zM843 342h1v1h-1zM845 342h1v1h-1zM847 342h1v1h-1zM849 342h1v1h-1zM851 342h1v1h-1zM853 342h1v1h-1zM855 342h1v1h-1zM857 342h1v1h-1zM859 342h1v1h-1zM861 342h1v1h-1zM863 342h1v1h-1zM865 342h1v1h-1zM867 342h1v1h-1zM869 342h1v1h-1zM871 342h1v1h-1zM873 342h1v1h-1zM875 342h1v1h-1zM877 342h1v1h-1zM879 342h1v1h-1zM881 342h1v1h-1zM883 342h1v1h-1zM885 342h1v1h-1zM887 342h1v1h-1zM889 342h1v1h-1zM891 342h1v1h-1zM893 342h1v1h-1zM895 342h1v1h-1zM897 342h1v1h-1zM899 342h1v1h-1zM901 342h1v1h-1zM903 342h1v1h-1zM905 342h1v1h-1zM907 342h1v1h-1zM909 342h1v1h-1zM911 342h1v1h-1zM913 342h1v1h-1zM915 342h1v1h-1zM917 342h1v1h-1zM919 342h5v1h-5zM925 342h1v1h-1zM927 342h1v1h-1zM929 342h1v1h-1zM931 342h1v1h-1zM933 342h1v1h-1zM935 342h1v1h-1zM937 342h1v1h-1zM939 342h1v1h-1zM941 342h1v1h-1zM943 342h1v1h-1zM945 342h1v1h-1zM947 342h1v1h-1zM949 342h1v1h-1zM951 342h1v1h-1zM953 342h1v1h-1zM955 342h1v1h-1zM957 342h1v1h-1zM959 342h1v1h-1zM961 342h1v1h-1zM963 342h1v1h-1zM965 342h1v1h-1zM967 342h1v1h-1zM969 342h1v1h-1zM971 342h1v1h-1zM973 342h1v1h-1zM975 342h1v1h-1zM977 342h1v1h-1zM979 342h1v1h-1zM981 342h1v1h-1zM983 342h1v1h-1zM985 342h1v1h-1zM987 342h1v1h-1zM989 342h1v1h-1zM991 342h1v1h-1zM993 342h1v1h-1zM995 342h1v1h-1zM997 342h1v1h-1zM999 342h1v1h-1zM1001 342h1v1h-1zM1003 342h1v1h-1zM1005 342h1v1h-1zM1007 342h1v1h-1zM1009 342h1v1h-1zM1011 342h1v1h-1zM1013 342h1v1h-1zM1015 342h1v1h-1zM1017 342h1v1h-1zM1019 342h1v1h-1zM41 343h1v1h-1zM61 343h1v1h-1zM81 343h1v1h-1zM101 343h1v1h-1zM141 343h1v1h-1zM161 343h1v1h-1zM181 343h1v1h-1zM201 343h1v1h-1zM241 343h1v1h-1zM261 343h1v1h-1zM281 343h1v1h-1zM301 343h1v1h-1zM341 343h1v1h-1zM361 343h1v1h-1zM381 343h1v1h-1zM401 343h1v1h-1zM441 343h1v1h-1zM461 343h1v1h-1zM481 343h1v1h-1zM501 343h1v1h-1zM541 343h1v1h-1zM561 343h1v1h-1zM581 343h1v1h-1zM601 343h1v1h-1zM641 343h1v1h-1zM661 343h1v1h-1zM681 343h1v1h-1zM701 343h1v1h-1zM741 343h1v1h-1zM761 343h1v1h-1zM781 343h1v1h-1zM801 343h1v1h-1zM841 343h1v1h-1zM861 343h1v1h-1zM881 343h1v1h-1zM901 343h1v1h-1zM941 343h1v1h-1zM961 343h1v1h-1zM981 343h1v1h-1zM1001 343h1v1h-1zM121 344h1v1h-1zM221 344h1v1h-1zM321 344h1v1h-1zM421 344h1v1h-1zM521 344h1v1h-1zM621 344h1v1h-1zM721 344h1v1h-1zM821 344h1v1h-1zM921 344h1v1h-1zM41 345h1v1h-1zM61 345h1v1h-1zM81 345h1v1h-1zM101 345h1v1h-1zM141 345h1v1h-1zM161 345h1v1h-1zM181 345h1v1h-1zM201 345h1v1h-1zM241 345h1v1h-1zM261 345h1v1h-1zM281 345h1v1h-1zM301 345h1v1h-1zM341 345h1v1h-1zM361 345h1v1h-1zM381 345h1v1h-1zM401 345h1v1h-1zM441 345h1v1h-1zM461 345h1v1h-1zM481 345h1v1h-1zM501 345h1v1h-1zM541 345h1v1h-1zM561 345h1v1h-1zM581 345h1v1h-1zM601 345h1v1h-1zM641 345h1v1h-1zM661 345h1v1h-1zM681 345h1v1h-1zM701 345h1v1h-1zM741 345h1v1h-1zM761 345h1v1h-1zM781 345h1v1h-1zM801 345h1v1h-1zM841 345h1v1h-1zM861 345h1v1h-1zM881 345h1v1h-1zM901 345h1v1h-1zM941 345h1v1h-1zM961 345h1v1h-1zM981 345h1v1h-1zM1001 345h1v1h-1zM121 346h1v1h-1zM221 346h1v1h-1zM321 346h1v1h-1zM421 346h1v1h-1zM521 346h1v1h-1zM621 346h1v1h-1zM721 346h1v1h-1zM821 346h1v1h-1zM921 346h1v1h-1zM121 348h1v1h-1zM221 348h1v1h-1zM321 348h1v1h-1zM421 348h1v1h-1zM521 348h1v1h-1zM621 348h1v1h-1zM721 348h1v1h-1zM821 348h1v1h-1zM921 348h1v1h-1zM521 350h1v1h-1zM521 352h1v1h-1zM521 354h1v1h-1zM21 355h1v1h-1zM23 355h1v1h-1zM121 355h1v1h-1zM221 355h1v1h-1zM321 355h1v1h-1zM421 355h1v1h-1zM518 355h1v1h-1zM520 355h3v1h-3zM524 355h1v1h-1zM621 355h1v1h-1zM721 355h1v1h-1zM821 355h1v1h-1zM921 355h1v1h-1zM1018 355h1v1h-1zM1020 355h1v1h-1zM521 356h1v1h-1zM521 358h1v1h-1zM521 360h1v1h-1zM521 362h1v1h-1zM521 364h1v1h-1zM521 366h1v1h-1zM21 368h1v1h-1zM23 368h1v1h-1zM121 368h1v1h-1zM221 368h1v1h-1zM321 368h1v1h-1zM421 368h1v1h-1zM518 368h1v1h-1zM520 368h3v1h-3zM524 368h1v1h-1zM621 368h1v1h-1zM721 368h1v1h-1zM821 368h1v1h-1zM921 368h1v1h-1zM1018 368h1v1h-1zM1020 368h1v1h-1zM521 370h1v1h-1zM521 372h1v1h-1zM521 374h1v1h-1zM521 376h1v1h-1zM521 378h1v1h-1zM521 380h1v1h-1zM21 381h1v1h-1zM23 381h1v1h-1zM121 381h1v1h-1zM221 381h1v1h-1zM321 381h1v1h-1zM421 381h1v1h-1zM518 381h1v1h-1zM520 381h3v1h-3zM524 381h1v1h-1zM621 381h1v1h-1zM721 381h1v1h-1zM821 381h1v1h-1zM921 381h1v1h-1zM1018 381h1v1h-1zM1020 381h1v1h-1zM521 382h1v1h-1zM521 384h1v1h-1zM521 386h1v1h-1zM521 388h1v1h-1zM521 390h1v1h-1zM521 392h1v1h-1zM21 394h1v1h-1zM23 394h1v1h-1zM121 394h1v1h-1zM221 394h1v1h-1zM321 394h1v1h-1zM421 394h1v1h-1zM518 394h1v1h-1zM520 394h3v1h-3zM524 394h1v1h-1zM621 394h1v1h-1zM721 394h1v1h-1zM821 394h1v1h-1zM921 394h1v1h-1zM1018 394h1v1h-1zM1020 394h1v1h-1zM521 396h1v1h-1zM521 398h1v1h-1zM521 400h1v1h-1zM521 402h1v1h-1zM521 404h1v1h-1zM521 406h1v1h-1zM22 407h1v1h-1zM24 407h1v1h-1zM26 407h1v1h-1zM41 407h1v1h-1zM61 407h1v1h-1zM81 407h1v1h-1zM101 407h1v1h-1zM121 407h1v1h-1zM141 407h1v1h-1zM161 407h1v1h-1zM181 407h1v1h-1zM201 407h1v1h-1zM221 407h1v1h-1zM241 407h1v1h-1zM261 407h1v1h-1zM281 407h1v1h-1zM301 407h1v1h-1zM321 407h1v1h-1zM341 407h1v1h-1zM361 407h1v1h-1zM381 407h1v1h-1zM401 407h1v1h-1zM421 407h1v1h-1zM441 407h1v1h-1zM461 407h1v1h-1zM481 407h1v1h-1zM501 407h1v1h-1zM515 407h1v1h-1zM517 407h1v1h-1zM519 407h1v1h-1zM521 407h1v1h-1zM523 407h1v1h-1zM525 407h1v1h-1zM527 407h1v1h-1zM541 407h1v1h-1zM561 407h1v1h-1zM581 407h1v1h-1zM601 407h1v1h-1zM621 407h1v1h-1zM641 407h1v1h-1zM661 407h1v1h-1zM681 407h1v1h-1zM701 407h1v1h-1zM721 407h1v1h-1zM741 407h1v1h-1zM761 407h1v1h-1zM781 407h1v1h-1zM801 407h1v1h-1zM821 407h1v1h-1zM841 407h1v1h-1zM861 407h1v1h-1zM881 407h1v1h-1zM901 407h1v1h-1zM921 407h1v1h-1zM941 407h1v1h-1zM961 407h1v1h-1zM981 407h1v1h-1zM1001 407h1v1h-1zM1015 407h1v1h-1zM1017 407h1v1h-1zM1019 407h1v1h-1zM521 408h1v1h-1zM521 410h1v1h-1zM521 412h1v1h-1zM521 414h1v1h-1zM521 416h1v1h-1zM521 418h1v1h-1zM21 420h1v1h-1zM23 420h1v1h-1zM121 420h1v1h-1zM221 420h1v1h-1zM321 420h1v1h-1zM421 420h1v1h-1zM518 420h1v1h-1zM520 420h3v1h-3zM524 420h1v1h-1zM621 420h1v1h-1zM721 420h1v1h-1zM821 420h1v1h-1zM921 420h1v1h-1zM1018 420h1v1h-1zM1020 420h1v1h-1zM521 422h1v1h-1zM521 424h1v1h-1zM521 426h1v1h-1zM521 428h1v1h-1zM521 430h1v1h-1zM521 432h1v1h-1zM21 433h1v1h-1zM23 433h1v1h-1zM121 433h1v1h-1zM221 433h1v1h-1zM321 433h1v1h-1zM421 433h1v1h-1zM518 433h1v1h-1zM520 433h3v1h-3zM524 433h1v1h-1zM621 433h1v1h-1zM721 433h1v1h-1zM821 433h1v1h-1zM921 433h1v1h-1zM1018 433h1v1h-1zM1020 433h1v1h-1zM521 434h1v1h-1zM521 436h1v1h-1zM521 438h1v1h-1zM521 440h1v1h-1zM521 442h1v1h-1zM521 444h1v1h-1zM21 446h1v1h-1zM23 446h1v1h-1zM121 446h1v1h-1zM221 446h1v1h-1zM321 446h1v1h-1zM421 446h1v1h-1zM518 446h1v1h-1zM520 446h3v1h-3zM524 446h1v1h-1zM621 446h1v1h-1zM721 446h1v1h-1zM821 446h1v1h-1zM921 446h1v1h-1zM1018 446h1v1h-1zM1020 446h1v1h-1zM521 448h1v1h-1zM521 450h1v1h-1zM521 452h1v1h-1zM521 454h1v1h-1zM521 456h1v1h-1zM521 458h1v1h-1zM21 459h1v1h-1zM23 459h1v1h-1zM121 459h1v1h-1zM221 459h1v1h-1zM321 459h1v1h-1zM421 459h1v1h-1zM518 459h1v1h-1zM520 459h3v1h-3zM524 459h1v1h-1zM621 459h1v1h-1zM721 459h1v1h-1zM821 459h1v1h-1zM921 459h1v1h-1zM1018 459h1v1h-1zM1020 459h1v1h-1zM521 460h1v1h-1zM521 462h1v1h-1zM521 464h1v1h-1zM521 466h1v1h-1zM521 468h1v1h-1zM521 470h1v1h-1zM521 471h1v1h-1zM22 472h1v1h-1zM24 472h1v1h-1zM26 472h1v1h-1zM41 472h1v1h-1zM61 472h1v1h-1zM81 472h1v1h-1zM101 472h1v1h-1zM121 472h1v1h-1zM141 472h1v1h-1zM161 472h1v1h-1zM181 472h1v1h-1zM201 472h1v1h-1zM221 472h1v1h-1zM241 472h1v1h-1zM261 472h1v1h-1zM281 472h1v1h-1zM301 472h1v1h-1zM321 472h1v1h-1zM341 472h1v1h-1zM361 472h1v1h-1zM381 472h1v1h-1zM401 472h1v1h-1zM421 472h1v1h-1zM441 472h1v1h-1zM461 472h1v1h-1zM481 472h1v1h-1zM501 472h1v1h-1zM515 472h1v1h-1zM517 472h1v1h-1zM519 472h1v1h-1zM521 472h1v1h-1zM523 472h1v1h-1zM525 472h1v1h-1zM527 472h1v1h-1zM541 472h1v1h-1zM561 472h1v1h-1zM581 472h1v1h-1zM601 472h1v1h-1zM621 472h1v1h-1zM641 472h1v1h-1zM661 472h1v1h-1zM681 472h1v1h-1zM701 472h1v1h-1zM721 472h1v1h-1zM741 472h1v1h-1zM761 472h1v1h-1zM781 472h1v1h-1zM801 472h1v1h-1zM821 472h1v1h-1zM841 472h1v1h-1zM861 472h1v1h-1zM881 472h1v1h-1zM901 472h1v1h-1zM921 472h1v1h-1zM941 472h1v1h-1zM961 472h1v1h-1zM981 472h1v1h-1zM1001 472h1v1h-1zM1015 472h1v1h-1zM1017 472h1v1h-1zM1019 472h1v1h-1zM521 473h1v1h-1zM521 474h1v1h-1zM521 476h1v1h-1zM521 478h1v1h-1zM521 480h1v1h-1zM521 482h1v1h-1zM521 484h1v1h-1zM21 485h1v1h-1zM23 485h1v1h-1zM121 485h1v1h-1zM221 485h1v1h-1zM321 485h1v1h-1zM421 485h1v1h-1zM518 485h1v1h-1zM520 485h3v1h-3zM524 485h1v1h-1zM621 485h1v1h-1zM721 485h1v1h-1zM821 485h1v1h-1zM921 485h1v1h-1zM1018 485h1v1h-1zM1020 485h1v1h-1zM521 486h1v1h-1zM521 488h1v1h-1zM521 490h1v1h-1zM521 492h1v1h-1zM521 494h1v1h-1zM521 496h1v1h-1zM21 498h1v1h-1zM23 498h1v1h-1zM121 498h1v1h-1zM221 498h1v1h-1zM321 498h1v1h-1zM421 498h1v1h-1zM518 498h1v1h-1zM520 498h3v1h-3zM524 498h1v1h-1zM621 498h1v1h-1zM721 498h1v1h-1zM821 498h1v1h-1zM921 498h1v1h-1zM1018 498h1v1h-1zM1020 498h1v1h-1zM521 500h1v1h-1zM521 502h1v1h-1zM521 504h1v1h-1zM521 506h1v1h-1zM521 508h1v1h-1zM521 510h1v1h-1zM21 511h1v1h-1zM23 511h1v1h-1zM121 511h1v1h-1zM221 511h1v1h-1zM321 511h1v1h-1zM421 511h1v1h-1zM518 511h1v1h-1zM520 511h3v1h-3zM524 511h1v1h-1zM621 511h1v1h-1zM721 511h1v1h-1zM821 511h1v1h-1zM921 511h1v1h-1zM1018 511h1v1h-1zM1020 511h1v1h-1zM521 512h1v1h-1zM521 514h1v1h-1zM521 516h1v1h-1zM521 518h1v1h-1zM521 520h1v1h-1zM521 522h1v1h-1zM21 524h1v1h-1zM23 524h1v1h-1zM121 524h1v1h-1zM221 524h1v1h-1zM321 524h1v1h-1zM421 524h1v1h-1zM518 524h1v1h-1zM520 524h3v1h-3zM524 524h1v1h-1zM621 524h1v1h-1zM721 524h1v1h-1zM821 524h1v1h-1zM921 524h1v1h-1zM1018 524h1v1h-1zM1020 524h1v1h-1zM521 526h1v1h-1zM521 528h1v1h-1zM521 530h1v1h-1zM521 532h1v1h-1zM521 534h1v1h-1zM521 536h1v1h-1zM22 537h1v1h-1zM24 537h1v1h-1zM26 537h1v1h-1zM41 537h1v1h-1zM61 537h1v1h-1zM81 537h1v1h-1zM101 537h1v1h-1zM121 537h1v1h-1zM141 537h1v1h-1zM161 537h1v1h-1zM181 537h1v1h-1zM201 537h1v1h-1zM221 537h1v1h-1zM241 537h1v1h-1zM261 537h1v1h-1zM281 537h1v1h-1zM301 537h1v1h-1zM321 537h1v1h-1zM341 537h1v1h-1zM361 537h1v1h-1zM381 537h1v1h-1zM401 537h1v1h-1zM421 537h1v1h-1zM441 537h1v1h-1zM461 537h1v1h-1zM481 537h1v1h-1zM501 537h1v1h-1zM515 537h1v1h-1zM517 537h1v1h-1zM519 537h1v1h-1zM521 537h1v1h-1zM523 537h1v1h-1zM525 537h1v1h-1zM527 537h1v1h-1zM541 537h1v1h-1zM561 537h1v1h-1zM581 537h1v1h-1zM601 537h1v1h-1zM621 537h1v1h-1zM641 537h1v1h-1zM661 537h1v1h-1zM681 537h1v1h-1zM701 537h1v1h-1zM721 537h1v1h-1zM741 537h1v1h-1zM761 537h1v1h-1zM781 537h1v1h-1zM801 537h1v1h-1zM821 537h1v1h-1zM841 537h1v1h-1zM861 537h1v1h-1zM881 537h1v1h-1zM901 537h1v1h-1zM921 537h1v1h-1zM941 537h1v1h-1zM961 537h1v1h-1zM981 537h1v1h-1zM1001 537h1v1h-1zM1015 537h1v1h-1zM1017 537h1v1h-1zM1019 537h1v1h-1zM521 538h1v1h-1zM521 540h1v1h-1zM521 542h1v1h-1zM521 544h1v1h-1zM521 546h1v1h-1zM521 548h1v1h-1zM21 550h1v1h-1zM23 550h1v1h-1zM121 550h1v1h-1zM221 550h1v1h-1zM321 550h1v1h-1zM421 550h1v1h-1zM518 550h1v1h-1zM520 550h3v1h-3zM524 550h1v1h-1zM621 550h1v1h-1zM721 550h1v1h-1zM821 550h1v1h-1zM921 550h1v1h-1zM1018 550h1v1h-1zM1020 550h1v1h-1zM521 552h1v1h-1zM521 554h1v1h-1zM521 556h1v1h-1zM521 558h1v1h-1zM521 560h1v1h-1zM521 562h1v1h-1zM21 563h1v1h-1zM23 563h1v1h-1zM121 563h1v1h-1zM221 563h1v1h-1zM321 563h1v1h-1zM421 563h1v1h-1zM518 563h1v1h-1zM520 563h3v1h-3zM524 563h1v1h-1zM621 563h1v1h-1zM721 563h1v1h-1zM821 563h1v1h-1zM921 563h1v1h-1zM1018 563h1v1h-1zM1020 563h1v1h-1zM521 564h1v1h-1zM521 566h1v1h-1zM521 568h1v1h-1zM521 570h1v1h-1zM521 572h1v1h-1zM521 574h1v1h-1zM21 576h1v1h-1zM23 576h1v1h-1zM121 576h1v1h-1zM221 576h1v1h-1zM321 576h1v1h-1zM421 576h1v1h-1zM518 576h1v1h-1zM520 576h3v1h-3zM524 576h1v1h-1zM621 576h1v1h-1zM721 576h1v1h-1zM821 576h1v1h-1zM921 576h1v1h-1zM1018 576h1v1h-1zM1020 576h1v1h-1zM521 578h1v1h-1zM521 580h1v1h-1zM521 582h1v1h-1zM521 584h1v1h-1zM521 586h1v1h-1zM521 588h1v1h-1zM21 589h1v1h-1zM23 589h1v1h-1zM121 589h1v1h-1zM221 589h1v1h-1zM321 589h1v1h-1zM421 589h1v1h-1zM518 589h1v1h-1zM520 589h3v1h-3zM524 589h1v1h-1zM621 589h1v1h-1zM721 589h1v1h-1zM821 589h1v1h-1zM921 589h1v1h-1zM1018 589h1v1h-1zM1020 589h1v1h-1zM521 590h1v1h-1zM521 592h1v1h-1zM521 594h1v1h-1zM521 596h1v1h-1zM521 598h1v1h-1zM521 600h1v1h-1zM521 601h1v1h-1zM22 602h1v1h-1zM24 602h1v1h-1zM26 602h1v1h-1zM41 602h1v1h-1zM61 602h1v1h-1zM81 602h1v1h-1zM101 602h1v1h-1zM121 602h1v1h-1zM141 602h1v1h-1zM161 602h1v1h-1zM181 602h1v1h-1zM201 602h1v1h-1zM221 602h1v1h-1zM241 602h1v1h-1zM261 602h1v1h-1zM281 602h1v1h-1zM301 602h1v1h-1zM321 602h1v1h-1zM341 602h1v1h-1zM361 602h1v1h-1zM381 602h1v1h-1zM401 602h1v1h-1zM421 602h1v1h-1zM441 602h1v1h-1zM461 602h1v1h-1zM481 602h1v1h-1zM501 602h1v1h-1zM515 602h1v1h-1zM517 602h1v1h-1zM519 602h1v1h-1zM521 602h1v1h-1zM523 602h1v1h-1zM525 602h1v1h-1zM527 602h1v1h-1zM541 602h1v1h-1zM561 602h1v1h-1zM581 602h1v1h-1zM601 602h1v1h-1zM621 602h1v1h-1zM641 602h1v1h-1zM661 602h1v1h-1zM681 602h1v1h-1zM701 602h1v1h-1zM721 602h1v1h-1zM741 602h1v1h-1zM761 602h1v1h-1zM781 602h1v1h-1zM801 602h1v1h-1zM821 602h1v1h-1zM841 602h1v1h-1zM861 602h1v1h-1zM881 602h1v1h-1zM901 602h1v1h-1zM921 602h1v1h-1zM941 602h1v1h-1zM961 602h1v1h-1zM981 602h1v1h-1zM1001 602h1v1h-1zM1015 602h1v1h-1zM1017 602h1v1h-1zM1019 602h1v1h-1zM521 603h1v1h-1zM521 604h1v1h-1zM521 606h1v1h-1zM521 608h1v1h-1zM521 610h1v1h-1zM521 612h1v1h-1zM521 614h1v1h-1zM21 615h1v1h-1zM23 615h1v1h-1zM121 615h1v1h-1zM221 615h1v1h-1zM321 615h1v1h-1zM421 615h1v1h-1zM518 615h1v1h-1zM520 615h3v1h-3zM524 615h1v1h-1zM621 615h1v1h-1zM721 615h1v1h-1zM821 615h1v1h-1zM921 615h1v1h-1zM1018 615h1v1h-1zM1020 615h1v1h-1zM521 616h1v1h-1zM521 618h1v1h-1zM521 620h1v1h-1zM521 622h1v1h-1zM521 624h1v1h-1zM521 626h1v1h-1zM21 628h1v1h-1zM23 628h1v1h-1zM121 628h1v1h-1zM221 628h1v1h-1zM321 628h1v1h-1zM421 628h1v1h-1zM518 628h1v1h-1zM520 628h3v1h-3zM524 628h1v1h-1zM621 628h1v1h-1zM721 628h1v1h-1zM821 628h1v1h-1zM921 628h1v1h-1zM1018 628h1v1h-1zM1020 628h1v1h-1zM521 630h1v1h-1zM521 632h1v1h-1zM521 634h1v1h-1zM521 636h1v1h-1zM521 638h1v1h-1zM521 640h1v1h-1zM21 641h1v1h-1zM23 641h1v1h-1zM121 641h1v1h-1zM221 641h1v1h-1zM321 641h1v1h-1zM421 641h1v1h-1zM518 641h1v1h-1zM520 641h3v1h-3zM524 641h1v1h-1zM621 641h1v1h-1zM721 641h1v1h-1zM821 641h1v1h-1zM921 641h1v1h-1zM1018 641h1v1h-1zM1020 641h1v1h-1zM521 642h1v1h-1zM521 644h1v1h-1zM521 646h1v1h-1zM521 648h1v1h-1zM521 650h1v1h-1zM521 652h1v1h-1zM21 654h1v1h-1zM23 654h1v1h-1zM121 654h1v1h-1zM221 654h1v1h-1zM321 654h1v1h-1zM421 654h1v1h-1zM518 654h1v1h-1zM520 654h3v1h-3zM524 654h1v1h-1zM621 654h1v1h-1zM721 654h1v1h-1zM821 654h1v1h-1zM921 654h1v1h-1zM1018 654h1v1h-1zM1020 654h1v1h-1zM521 656h1v1h-1zM521 658h1v1h-1zM521 660h1v1h-1zM121 662h1v1h-1zM221 662h1v1h-1zM321 662h1v1h-1zM421 662h1v1h-1zM521 662h1v1h-1zM621 662h1v1h-1zM721 662h1v1h-1zM821 662h1v1h-1zM921 662h1v1h-1zM121 664h1v1h-1zM221 664h1v1h-1zM321 664h1v1h-1zM421 664h1v1h-1zM521 664h1v1h-1zM621 664h1v1h-1zM721 664h1v1h-1zM821 664h1v1h-1zM921 664h1v1h-1zM41 665h1v1h-1zM61 665h1v1h-1zM81 665h1v1h-1zM101 665h1v1h-1zM141 665h1v1h-1zM161 665h1v1h-1zM181 665h1v1h-1zM201 665h1v1h-1zM241 665h1v1h-1zM261 665h1v1h-1zM281 665h1v1h-1zM301 665h1v1h-1zM341 665h1v1h-1zM361 665h1v1h-1zM381 665h1v1h-1zM401 665h1v1h-1zM441 665h1v1h-1zM461 665h1v1h-1zM481 665h1v1h-1zM501 665h1v1h-1zM541 665h1v1h-1zM561 665h1v1h-1zM581 665h1v1h-1zM601 665h1v1h-1zM641 665h1v1h-1zM661 665h1v1h-1zM681 665h1v1h-1zM701 665h1v1h-1zM741 665h1v1h-1zM761 665h1v1h-1zM781 665h1v1h-1zM801 665h1v1h-1zM841 665h1v1h-1zM861 665h1v1h-1zM881 665h1v1h-1zM901 665h1v1h-1zM941 665h1v1h-1zM961 665h1v1h-1zM981 665h1v1h-1zM1001 665h1v1h-1zM121 666h1v1h-1zM221 666h1v1h-1zM321 666h1v1h-1zM421 666h1v1h-1zM521 666h1v1h-1zM621 666h1v1h-1zM721 666h1v1h-1zM821 666h1v1h-1zM921 666h1v1h-1zM41 667h1v1h-1zM61 667h1v1h-1zM81 667h1v1h-1zM101 667h1v1h-1zM141 667h1v1h-1zM161 667h1v1h-1zM181 667h1v1h-1zM201 667h1v1h-1zM241 667h1v1h-1zM261 667h1v1h-1zM281 667h1v1h-1zM301 667h1v1h-1zM341 667h1v1h-1zM361 667h1v1h-1zM381 667h1v1h-1zM401 667h1v1h-1zM441 667h1v1h-1zM461 667h1v1h-1zM481 667h1v1h-1zM501 667h1v1h-1zM541 667h1v1h-1zM561 667h1v1h-1zM581 667h1v1h-1zM601 667h1v1h-1zM641 667h1v1h-1zM661 667h1v1h-1zM681 667h1v1h-1zM701 667h1v1h-1zM741 667h1v1h-1zM761 667h1v1h-1zM781 667h1v1h-1zM801 667h1v1h-1zM841 667h1v1h-1zM861 667h1v1h-1zM881 667h1v1h-1zM901 667h1v1h-1zM941 667h1v1h-1zM961 667h1v1h-1zM981 667h1v1h-1zM1001 667h1v1h-1z"/>
<rect x="20" y="16" width="1002" height="1" fill="#5890cc"/>
<rect x="20" y="668" width="1002" height="1" fill="#5890cc"/>
<rect x="20" y="16" width="1" height="653" fill="#5890cc"/>
<rect x="1021" y="16" width="1" height="653" fill="#5890cc"/>
<rect x="121" y="0" width="800" height="1" fill="#5890cc"/>
<rect x="121" y="15" width="800" height="1" fill="#5890cc"/>
<rect x="121" y="0" width="1" height="16" fill="#5890cc"/>
<rect x="920" y="0" width="1" height="16" fill="#5890cc"/>
<rect x="282" y="7" width="479" height="1" fill="#00e0e0"/>
<rect x="519" y="1" width="5" height="14" fill="#fff"/>
<rect x="521" y="3" width="1" height="10" fill="#000"/>
<rect x="521" y="3" width="1" height="2" fill="#ff9900"/>
<rect x="518" y="1" width="1" height="1" fill="#ff9900"/>
<rect x="524" y="1" width="1" height="1" fill="#ff9900"/>
<path fill="#ff9900" shape-rendering="auto" d="M515.5 17h12l-6 6.5z"/>
<g shape-rendering="auto">
<path fill="#ff9900" d="M122 10.5l5-5.5h6l1.5 1.5v8.5l-1.5 1.5h-6z"/>
<path fill="#000" d="M126.9 5.6h6.2v1.5h-2.1v7.9h-2v-7.9h-2.1z"/>
<path fill="#ff9900" d="M21.5 30.5l6-6.5h9l1.5 1.5v10l-1.5 1.5h-9z"/>
<path fill="#000" d="M27.2 25.2h9.8v1.9h-3.8v8.7h-2.2v-8.7h-3.8z"/>
<path fill="none" stroke="#ff55ff" stroke-width="1.5" d="M0.5 71.8h12.3l6.7 7.7l-6.7 7.7h-12.3z"/>
<text x="7.3" y="84.8" font-size="14" fill="#c800c8" text-anchor="middle">3</text>
<defs><linearGradient id="cg" x1="0" y1="0" x2="0" y2="1"><stop offset="0" stop-color="#19e6e6"/><stop offset="0.75" stop-color="#00d8d8"/><stop offset="1" stop-color="#009c9c"/></linearGradient></defs>
<path fill="url(#cg)" d="M0 178h13l7 8.5l-7 8.5h-13z"/>
<text x="7.5" y="191.8" font-size="13.5" fill="#000" text-anchor="middle" font-weight="bold">2</text>
<path fill="none" stroke="#44e044" stroke-width="1.5" d="M0.5 658.8h12.3l6.7 7.7l-6.7 7.7h-12.3z"/>
<text x="7.3" y="671.8" font-size="14" fill="#00c000" text-anchor="middle">4</text>
<text transform="translate(0.00 14.8)" font-size="19.5" fill="#fff" letter-spacing="0.100" font-weight="bold" style="font-family:'Liberation Serif','DejaVu Serif',serif;stroke-width:0">Tek</text>
<text transform="translate(34.40 12.9)" font-size="15.2" fill="#fff" stroke="#fff" letter-spacing="1.500">Run</text>
<text transform="translate(925.60 12.8)" font-size="15.2" fill="#fff" stroke="#fff" letter-spacing="1.260">PrTrig</text>
<rect x="20.5" y="670.5" width="554" height="20" rx="6" ry="6" fill="#030503" stroke="#e2e2e2" stroke-width="1"/>
<rect x="582.5" y="670.5" width="147" height="37" rx="6" ry="6" fill="#030503" stroke="#e2e2e2" stroke-width="1"/>
<rect x="737.5" y="670.5" width="106" height="37" rx="6" ry="6" fill="#030503" stroke="#e2e2e2" stroke-width="1"/>
<rect x="851.5" y="670.5" width="170" height="38" rx="6" ry="6" fill="#030503" stroke="#e2e2e2" stroke-width="1"/>
<rect x="909.5" y="729.5" width="112" height="36" rx="6" ry="6" fill="#030503" stroke="#e2e2e2" stroke-width="1"/>
<rect x="165" y="673" width="25.5" height="16" rx="8.0" ry="8.0" fill="#00dce6"/>
<text transform="translate(173.55 686)" font-size="14" fill="#000" stroke="#000">2</text>
<text transform="translate(207.00 685.6)" font-size="15" fill="#00dce6" stroke="#00dce6" letter-spacing="0.238">200mV</text>
<text transform="translate(268.78 685.6) scale(1.0388 1)" font-size="15" fill="#00dce6" stroke="#00dce6">Ω</text>
<text transform="translate(282.72 681.8) scale(0.9756 1)" font-size="8" fill="#00dce6" stroke="#00dce6">B</text>
<text transform="translate(286.77 685.6) scale(0.7671 1)" font-size="8" fill="#00dce6" stroke="#00dce6">W</text>
<rect x="304" y="673" width="25.5" height="16" rx="8.0" ry="8.0" fill="#b000b4"/>
<text transform="translate(312.35 686)" font-size="14" fill="#000" stroke="#000">3</text>
<text transform="translate(345.90 685.6)" font-size="15" fill="#c000c0" stroke="#c000c0" letter-spacing="0.263">200mV</text>
<text transform="translate(407.68 685.6) scale(1.0388 1)" font-size="15" fill="#c000c0" stroke="#c000c0">Ω</text>
<text transform="translate(421.62 681.8) scale(0.9756 1)" font-size="8" fill="#c000c0" stroke="#c000c0">B</text>
<text transform="translate(425.67 685.6) scale(0.7671 1)" font-size="8" fill="#c000c0" stroke="#c000c0">W</text>
<rect x="442.8" y="673" width="25.5" height="16" rx="8.0" ry="8.0" fill="#00a000"/>
<text transform="translate(451.20 686)" font-size="14" fill="#000" stroke="#000">4</text>
<path fill="#00b000" d="M477.6 674.7h1.7v7.3h2.9l-3.8 4.4l-3.8-4.4h3z"/>
<text transform="translate(485.20 685.6)" font-size="15" fill="#00b000" stroke="#00b000" letter-spacing="0.150">100mV</text>
<text transform="translate(546.58 685.6) scale(1.0388 1)" font-size="15" fill="#00b000" stroke="#00b000">Ω</text>
<text transform="translate(560.52 681.8) scale(0.9756 1)" font-size="8" fill="#00b000" stroke="#00b000">B</text>
<text transform="translate(564.57 685.6) scale(0.7671 1)" font-size="8" fill="#00b000" stroke="#00b000">W</text>
<text transform="translate(587.70 685.6)" font-size="15" fill="#fff" stroke="#fff" letter-spacing="0.940">2.00μs</text>
<rect x="587" y="691" width="11.8" height="13" rx="1.8" fill="#ff9900"/>
<path fill="#000" d="M588.1 692.3h10v1.9h-3.7v8.7h-2.8v-8.7h-3.5z"/>
<path fill="#ff9900" d="M600 696.7h5v-2.4l4 3.2l-4 3.4v-2.6h-5z"/>
<path fill="#ff9900" d="M610.2 694.2h11.2l-5.6 6z"/>
<text transform="translate(622.10 702.8)" font-size="15" fill="#ff9900" stroke="#ff9900" letter-spacing="0.400">1.806000ms</text>
<text transform="translate(742.65 685.7)" font-size="15" fill="#fff" stroke="#fff" letter-spacing="0.664">2.50GS/s</text>
<text transform="translate(742.65 702.6)" font-size="15" fill="#fff" stroke="#fff" letter-spacing="0.981">5M points</text>
<rect x="882" y="673" width="25.5" height="16" rx="8.0" ry="8.0" fill="#fff200"/>
<text transform="translate(890.05 686)" font-size="14" fill="#000" stroke="#000">1</text>
<path fill="none" stroke="#fff" stroke-width="1.6" d="M920 685.2h4.4l3.2-9h4.4"/>
<text transform="translate(964.80 685.6)" font-size="15" fill="#fff" stroke="#fff" letter-spacing="0.500">2.10 V</text>
<text transform="translate(915.40 745.7)" font-size="15" fill="#fff" stroke="#fff" letter-spacing="0.436">17 Oct  2023</text>
<text transform="translate(915.00 762)" font-size="15" fill="#fff" stroke="#fff" letter-spacing="0.586">08:09:29</text>
<rect x="20" y="714" width="114" height="54.5" rx="4.5" ry="4.5" fill="#6e6f6e"/>
<rect x="21.5" y="715.5" width="111.5" height="52" rx="3.5" ry="3.5" fill="#555655"/>
<text transform="translate(58.80 737.8)" font-size="15" fill="#fff" stroke="#fff" letter-spacing="-0.133">Save</text>
<text transform="translate(23.75 755)" font-size="15" fill="#fff" stroke="#fff" letter-spacing="0.295">Screen Image</text>
<rect x="138" y="714" width="114" height="54.5" rx="4.5" ry="4.5" fill="#6e6f6e"/>
<rect x="139.5" y="715.5" width="111.5" height="52" rx="3.5" ry="3.5" fill="#555655"/>
<text transform="translate(176.80 737.8)" font-size="15" fill="#fff" stroke="#fff" letter-spacing="-0.133">Save</text>
<text transform="translate(155.75 755)" font-size="15" fill="#fff" stroke="#fff" letter-spacing="0.579">Waveform</text>
<rect x="256" y="714" width="114" height="54.5" rx="4.5" ry="4.5" fill="#6e6f6e"/>
<rect x="257.5" y="715.5" width="111.5" height="52" rx="3.5" ry="3.5" fill="#555655"/>
<text transform="translate(294.80 737.8)" font-size="15" fill="#fff" stroke="#fff" letter-spacing="-0.133">Save</text>
<text transform="translate(289.50 755)" font-size="15" fill="#fff" stroke="#fff" letter-spacing="1.025">Setup</text>
<rect x="374" y="714" width="114" height="54.5" rx="4.5" ry="4.5" fill="#6e6f6e"/>
<rect x="375.5" y="715.5" width="111.5" height="52" rx="3.5" ry="3.5" fill="#555655"/>
<text transform="translate(409.10 737.8)" font-size="15" fill="#fff" stroke="#fff" letter-spacing="0.200">Recall</text>
<text transform="translate(391.75 755)" font-size="15" fill="#fff" stroke="#fff" letter-spacing="0.579">Waveform</text>
<rect x="492" y="714" width="114" height="54.5" rx="4.5" ry="4.5" fill="#6e6f6e"/>
<rect x="493.5" y="715.5" width="111.5" height="52" rx="3.5" ry="3.5" fill="#555655"/>
<text transform="translate(527.10 737.8)" font-size="15" fill="#fff" stroke="#fff" letter-spacing="0.200">Recall</text>
<text transform="translate(525.50 755)" font-size="15" fill="#fff" stroke="#fff" letter-spacing="1.025">Setup</text>
<rect x="610" y="714" width="114" height="54.5" rx="4.5" ry="4.5" fill="#6e6f6e"/>
<rect x="611.5" y="715.5" width="111.5" height="52" rx="3.5" ry="3.5" fill="#555655"/>
<text transform="translate(640.90 728.7)" font-size="15" fill="#fff" stroke="#fff" letter-spacing="0.960">Assign</text>
<rect x="639.5" y="734" width="35" height="14.5" rx="4" fill="#8c8c8c"/>
<path fill="#fbfbfb" d="M644 733h29.5v13.5h-29.5a5 5 0 0 1 -5 -5v-3.500a5 5 0 0 1 5 -5z"/>
<text transform="translate(642.95 744.3)" font-size="10.5" fill="#000" letter-spacing="0.317" font-weight="bold" style="font-family:'Liberation Sans',sans-serif;stroke-width:0">Save</text>
<text transform="translate(679.60 745.3)" font-size="15" fill="#fff" stroke="#fff" letter-spacing="1.100">to</text>
<rect x="641" y="750" width="52" height="16" fill="#0a64ff"/>
<text transform="translate(643.00 762.7)" font-size="15" fill="#fff" stroke="#fff" letter-spacing="0.200">Image</text>
<rect x="728" y="714" width="114" height="54.5" rx="4.5" ry="4.5" fill="#6e6f6e"/>
<rect x="729.5" y="715.5" width="111.5" height="52" rx="3.5" ry="3.5" fill="#555655"/>
<text transform="translate(771.00 737.8)" font-size="15" fill="#fff" stroke="#fff" letter-spacing="1.100">File</text>
<text transform="translate(754.20 755)" font-size="15" fill="#fff" stroke="#fff" letter-spacing="0.825">Utilities</text>
</g>
</svg></body></html>
